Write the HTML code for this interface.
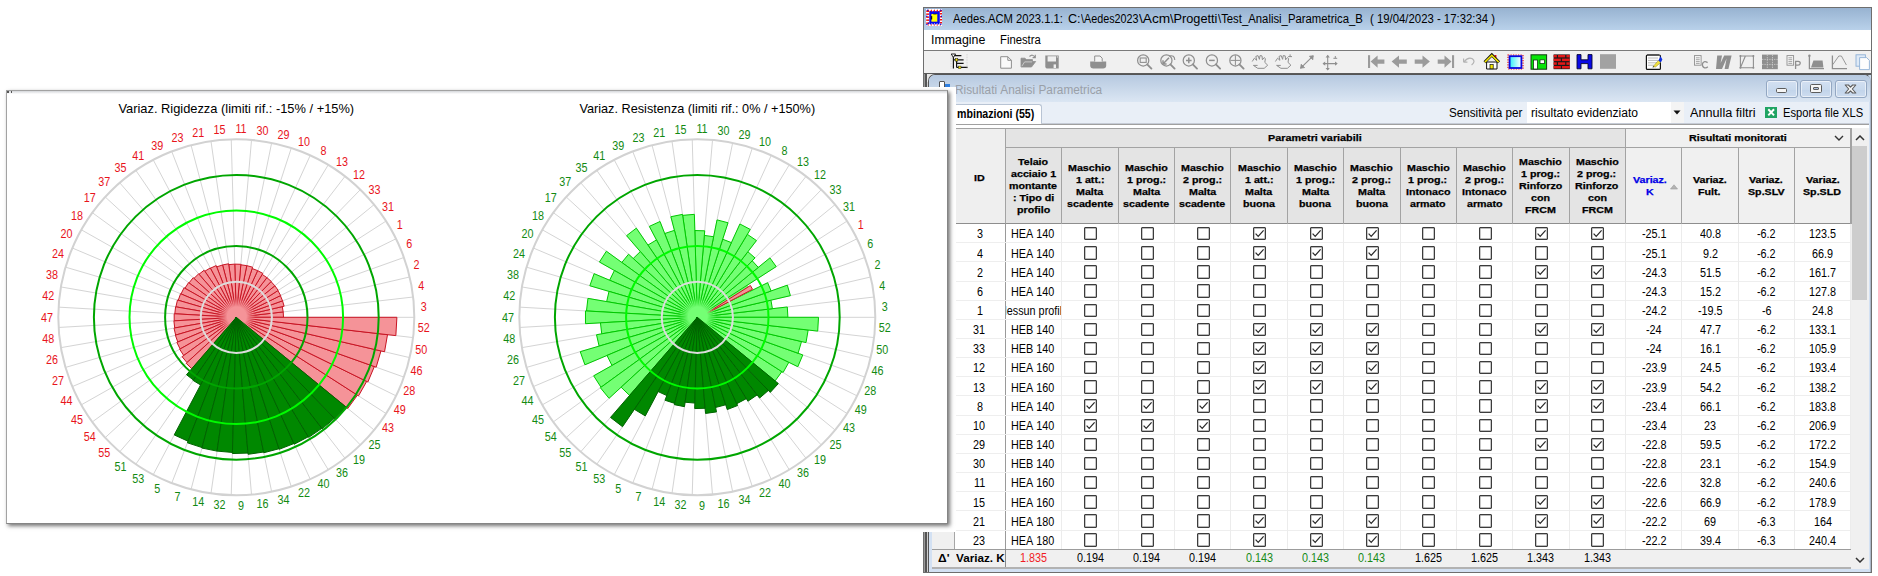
<!DOCTYPE html>
<html><head><meta charset="utf-8"><title>Aedes.ACM</title>
<style>
html,body{margin:0;padding:0;background:#fff;}
body{width:1878px;height:576px;position:relative;overflow:hidden;font-family:"Liberation Sans",sans-serif;}
.b{position:absolute;box-sizing:border-box;}
.t{position:absolute;white-space:nowrap;transform-origin:0 50%;}
svg{position:absolute;left:0;top:0;}
svg text{font-family:"Liberation Sans",sans-serif;font-size:12px;}
</style></head><body>

<div class="b" style="left:923px;top:7px;width:949px;height:566px;background:#fff;border:1px solid #6e6e6e;"></div>
<div class="b" style="left:924px;top:8px;width:947px;height:22px;background:linear-gradient(#98b3d1,#b9d1ea);"></div>
<div class="b" style="left:924px;top:30px;width:947px;height:21px;background:#fff;"></div>
<div class="b" style="left:924px;top:50px;width:947px;height:24px;background:#f0f0f0;border-top:1px solid #7a7a7a;"></div>
<div class="b" style="left:924px;top:73.4px;width:947px;height:1.2px;background:#5a5a5a;"></div>
<div class="b" style="left:924px;top:75px;width:947px;height:497px;background:#c9dbef;"></div>
<svg width="16.7" height="17" viewBox="0 0 16.7 17" style="left:925.7px;top:9.1px"><rect x="0" y="0" width="16.7" height="17" fill="#fff"/><path d="M0.9 2.9 L2.3 0.2 L3.7 2.9 Z" fill="#f01010"/><circle cx="2.3" cy="15.9" r="0.7" fill="#f01010"/><path d="M0.2 1.4 H3.2 V2.9 H0.2 Z" fill="#f01010"/><path d="M13.6 1.0 L16.4 1.0 L15 3.3 Z" fill="#f01010"/><path d="M3.9 2.9 L5.3 0.2 L6.7 2.9 Z" fill="#f01010"/><circle cx="5.3" cy="15.9" r="0.7" fill="#f01010"/><path d="M0.2 4.4 H3.2 V5.9 H0.2 Z" fill="#f01010"/><path d="M13.6 4.0 L16.4 4.0 L15 6.3 Z" fill="#f01010"/><path d="M6.9 2.9 L8.3 0.2 L9.7 2.9 Z" fill="#f01010"/><circle cx="8.3" cy="15.9" r="0.7" fill="#f01010"/><path d="M0.2 7.4 H3.2 V8.9 H0.2 Z" fill="#f01010"/><path d="M13.6 7.0 L16.4 7.0 L15 9.3 Z" fill="#f01010"/><path d="M9.9 2.9 L11.3 0.2 L12.7 2.9 Z" fill="#f01010"/><circle cx="11.3" cy="15.9" r="0.7" fill="#f01010"/><path d="M0.2 10.4 H3.2 V11.9 H0.2 Z" fill="#f01010"/><path d="M13.6 10.0 L16.4 10.0 L15 12.3 Z" fill="#f01010"/><path d="M12.9 2.9 L14.3 0.2 L15.7 2.9 Z" fill="#f01010"/><circle cx="14.3" cy="15.9" r="0.7" fill="#f01010"/><path d="M0.2 13.4 H3.2 V14.9 H0.2 Z" fill="#f01010"/><path d="M13.6 13.0 L16.4 13.0 L15 15.3 Z" fill="#f01010"/><circle cx="1.6" cy="1.2" r="0.8" fill="#1010e0"/><circle cx="14.8" cy="1.2" r="0.8" fill="#1010e0"/><circle cx="0.9" cy="15.6" r="0.8" fill="#1010e0"/><circle cx="14.8" cy="15.3" r="0.8" fill="#1010e0"/><circle cx="0.8" cy="7.2" r="0.8" fill="#1010e0"/><circle cx="15.6" cy="7.4" r="0.8" fill="#1010e0"/><circle cx="2.6" cy="14.2" r="0.8" fill="#1010e0"/><rect x="3.3" y="2.7" width="10.5" height="11.7" fill="#0808f0"/><circle cx="4.6" cy="14.6" r="0.9" fill="#0808f0"/><circle cx="4.6" cy="2.8" r="0.8" fill="#0808f0"/><circle cx="7.2" cy="14.6" r="0.9" fill="#0808f0"/><circle cx="7.2" cy="2.8" r="0.8" fill="#0808f0"/><circle cx="9.8" cy="14.6" r="0.9" fill="#0808f0"/><circle cx="9.8" cy="2.8" r="0.8" fill="#0808f0"/><circle cx="12.4" cy="14.6" r="0.9" fill="#0808f0"/><circle cx="12.4" cy="2.8" r="0.8" fill="#0808f0"/><rect x="5.4" y="5" width="5.9" height="7.7" fill="#ffff00"/><rect x="4.9" y="6.9" width="1.3" height="3.6" rx="0.6" fill="#101010"/><rect x="7.2" y="4.7" width="3.4" height="0.7" fill="#101010"/></svg>
<span class="t" style="left:953.20px;top:12.54px;font-size:12px;line-height:12px;color:#000;transform:scaleX(0.9361);">Aedes.ACM&nbsp;2023.1.1:</span>
<span class="t" style="left:1067.70px;top:12.54px;font-size:12px;line-height:12px;color:#000;transform:scaleX(1.0500);">C:</span>
<span class="t" style="left:1080.90px;top:12.54px;font-size:12px;line-height:12px;color:#000;transform:scaleX(0.8977);">\Aedes2023</span>
<span class="t" style="left:1138.80px;top:12.54px;font-size:12px;line-height:12px;color:#000;transform:scaleX(1.1414);">\Acm</span>
<span class="t" style="left:1170.30px;top:12.54px;font-size:12px;line-height:12px;color:#000;transform:scaleX(1.0607);">\Progetti</span>
<span class="t" style="left:1218.00px;top:12.54px;font-size:12px;line-height:12px;color:#000;transform:scaleX(0.9440);">\Test_Analisi_Parametrica_B</span>
<span class="t" style="left:1369.70px;top:12.54px;font-size:12px;line-height:12px;color:#000;transform:scaleX(0.9464);">(&nbsp;19/04/2023&nbsp;-&nbsp;17:32:34&nbsp;)</span>
<span class="t" style="left:931.30px;top:33.64px;font-size:12px;line-height:12px;color:#000;transform:scaleX(1.0326);">Immagine</span>
<span class="t" style="left:999.80px;top:33.64px;font-size:12px;line-height:12px;color:#000;transform:scaleX(0.9413);">Finestra</span>
<svg width="1878" height="80" viewBox="0 0 1878 80"><g stroke="#111" stroke-width="1.2" fill="none"><path d="M953.4 55.5 V68.6 M953.4 55.6 H961.4 M953.4 59.8 H963.6 M956.6 59.8 V67.4 M956.6 63.4 H963.6 M956.6 67.4 H967.6"/></g><path d="M951.2 54 H955.6 L953.4 57.4 Z" fill="#fff" stroke="#111" stroke-width="0.9"/><path d="M951 55 V69 M967 54 V69" stroke="#bdbdbd" stroke-width="0.6" stroke-dasharray="0.8 0.8"/><rect x="955.2" y="58.5" width="2.6" height="2.6" fill="#f0e000" stroke="#222" stroke-width="0.5"/><rect x="958.4" y="66.1" width="2.6" height="2.6" fill="#f0e000" stroke="#222" stroke-width="0.5"/><path d="M1000.7 56.7 H1007.8 L1011.4 60.3 V68.2 H1000.7 Z" fill="#fafafa" stroke="#8f8f8f" stroke-width="1"/><path d="M1007.8 56.7 V60.3 H1011.4" fill="none" stroke="#8f8f8f" stroke-width="1"/><path d="M1021 67 V58.2 H1025 L1026.3 59.6 H1032.5 V61.5 H1035.7 L1031.5 67 Z" fill="#8f8f8f" stroke="#8f8f8f" stroke-width="0.8" stroke-linejoin="round"/><path d="M1021.8 66.2 L1024.6 61.9 H1032" stroke="#cfcfcf" stroke-width="0.9" fill="none"/><path d="M1029.5 56.5 Q1032.5 53.5 1035 57.2 M1035.3 54.8 V57.6 H1032.6" fill="none" stroke="#8f8f8f" stroke-width="1.1"/><path d="M1045.3 55.5 H1058.7 V68.5 H1046.6 L1045.3 67.2 Z" fill="#8f8f8f"/><rect x="1047.6" y="56.3" width="8.4" height="5.2" fill="#efefef"/><rect x="1053.6" y="64.4" width="2.4" height="3.6" fill="#efefef"/><rect x="1056.8" y="56.4" width="1.1" height="1.1" fill="#efefef"/><path d="M1090.2 61.5 H1106.2 V65.3 Q1106.2 68.5 1103 68.5 H1093.4 Q1090.2 68.5 1090.2 65.3 Z" fill="#8f8f8f"/><path d="M1094.7 61.5 V56 H1100 L1102.2 58.2 V61.5" fill="#f4f4f4" stroke="#8f8f8f" stroke-width="1"/><circle cx="1143.2" cy="60.4" r="5.6" fill="none" stroke="#8f8f8f" stroke-width="1.25"/><path d="M1147.2 64.4 L1151.4 68.6" stroke="#8f8f8f" stroke-width="1.9" stroke-linecap="round"/><rect x="1140.2" y="58" width="6" height="4.4" fill="none" stroke="#8f8f8f" stroke-width="1.1"/><circle cx="1166.4" cy="60.4" r="5.6" fill="none" stroke="#8f8f8f" stroke-width="1.25"/><path d="M1170.4 64.4 L1174.6 68.6" stroke="#8f8f8f" stroke-width="1.9" stroke-linecap="round"/><path d="M1163.2 63.8 L1169 57.8 M1163 63.9 V60.3 M1163 63.9 H1166.6" stroke="#8f8f8f" stroke-width="1.5" fill="none"/><path d="M1169 56 Q1174.5 54.5 1174.8 60" stroke="#8f8f8f" stroke-width="1.1" fill="none"/><circle cx="1188.8" cy="60.4" r="5.6" fill="none" stroke="#8f8f8f" stroke-width="1.25"/><path d="M1192.8 64.4 L1197.0 68.6" stroke="#8f8f8f" stroke-width="1.9" stroke-linecap="round"/><path d="M1186 60.4 H1191.6 M1188.8 57.6 V63.2" stroke="#8f8f8f" stroke-width="1.5"/><circle cx="1211.9" cy="60.4" r="5.6" fill="none" stroke="#8f8f8f" stroke-width="1.25"/><path d="M1215.9 64.4 L1220.1 68.6" stroke="#8f8f8f" stroke-width="1.9" stroke-linecap="round"/><path d="M1209.1 60.4 H1214.7" stroke="#8f8f8f" stroke-width="1.5"/><circle cx="1235.4" cy="60.4" r="5.6" fill="none" stroke="#8f8f8f" stroke-width="1.25"/><path d="M1239.4 64.4 L1243.6 68.6" stroke="#8f8f8f" stroke-width="1.9" stroke-linecap="round"/><path d="M1230.4 60.4 H1240.4 M1235.4 55.4 V65.4" stroke="#8f8f8f" stroke-width="1"/><path d="M1252.2 61.5 L1254.4 58.2 L1256.7 60.3 L1255.8 56.4 L1258.0 55.6 L1259.4 59.3 L1260.0 55.6 L1262.0 55.9 L1262.4 59.8 L1264.2 57.6 L1265.4 58.6 L1264.8 62.4 L1267.7 65.2 L1264.2 68.3 H1257.7 L1253.4 65.4 H1257.6000000000001" fill="none" stroke="#8f8f8f" stroke-width="1" stroke-linejoin="round"/><path d="M1275.4 61.5 L1277.6000000000001 58.2 L1279.9 60.3 L1279.0 56.4 L1281.2 55.6 L1282.6000000000001 59.3 L1283.2 55.6 L1285.2 55.9 L1285.6000000000001 59.8 L1287.4 57.6 L1288.6000000000001 58.6 L1288.0 62.4 L1290.9 65.2 L1287.4 68.3 H1280.9 L1276.6000000000001 65.4 H1280.8000000000002" fill="none" stroke="#8f8f8f" stroke-width="1" stroke-linejoin="round"/><path d="M1288.2 56.6 H1292 M1290.1 54.4 V56.6" stroke="#8f8f8f" stroke-width="1"/><path d="M1300.4 68.4 L1313.4 55.6" stroke="#8f8f8f" stroke-width="1.1"/><path d="M1301.2 64.2 L1300.6 68.2 L1304.6 67.6 Z M1309.4 56.2 L1313.2 55.8 L1312.8 59.8 Z" fill="#8f8f8f" stroke="#8f8f8f" stroke-width="0.8"/><path d="M1327.7 55.5 V70 M1323 63.6 H1337" stroke="#8f8f8f" stroke-width="1.1"/><path d="M1325.6 57.6 L1327.7 54.8 L1329.8 57.6 Z M1325.6 68 L1327.7 70.6 L1329.8 68 Z M1325.2 61.5 L1322.5 63.6 L1325.2 65.7 Z M1335 61.5 L1337.7 63.6 L1335 65.7 Z" fill="#8f8f8f"/><path d="M1333.4 58.3 H1337.2 M1335.3 56 V58.3" stroke="#8f8f8f" stroke-width="1"/><rect x="1368" y="55.2" width="2.1" height="12.8" fill="#9b9b9b"/><path d="M1370.6 61.6 L1377.6 55.4 V59.5 H1384.4 V63.7 H1377.6 V67.8 Z" fill="#9b9b9b"/><path d="M1391.6 61.6 L1399 55.4 V59.5 H1406.8 V63.7 H1399 V67.8 Z" fill="#9b9b9b"/><path d="M1429.9 61.6 L1422.5 55.4 V59.5 H1414.7 V63.7 H1422.5 V67.8 Z" fill="#9b9b9b"/><rect x="1452" y="55.2" width="2.1" height="12.8" fill="#9b9b9b"/><path d="M1451.5 61.6 L1444.5 55.4 V59.5 H1437.7 V63.7 H1444.5 V67.8 Z" fill="#9b9b9b"/><path d="M1463.6 62.2 H1467.4 M1463.6 62.2 V58.6 M1464 62 Q1468 56.6 1472.4 58.8 Q1476 61.6 1471.6 65" fill="none" stroke="#b3b3b3" stroke-width="1.2"/><rect x="1494.4" y="55" width="2" height="4.2" fill="#e01010"/><path d="M1486.6 62 H1497 V69 H1486.6 Z" fill="#fff" stroke="#111" stroke-width="1"/><path d="M1484.6 62.3 L1491.8 55 L1499 62.3" fill="none" stroke="#111" stroke-width="3" stroke-linejoin="miter"/><path d="M1484.9 62.1 L1491.8 55.2 L1498.7 62.1" fill="none" stroke="#f4e800" stroke-width="1.5" stroke-linejoin="miter"/><rect x="1490" y="64.6" width="3.2" height="4.2" fill="#f4e800" stroke="#111" stroke-width="0.7"/><defs><linearGradient id="cy" x1="0" x2="1" y1="0" y2="0"><stop offset="0" stop-color="#30f0f8"/><stop offset="1" stop-color="#fff"/></linearGradient></defs><rect x="1508" y="55" width="15" height="14" fill="none" stroke="#f01010" stroke-width="1.2" stroke-dasharray="1.2 1.3"/><rect x="1509.6" y="56.2" width="11.8" height="11.8" fill="url(#cy)" stroke="#0808e0" stroke-width="1.8"/><rect x="1531" y="54.8" width="15.6" height="14.4" fill="#08e408" stroke="#113a11" stroke-width="1"/><rect x="1533.6" y="60" width="3.8" height="9" fill="#fff" stroke="#113a11" stroke-width="0.8"/><rect x="1540" y="59.8" width="4.6" height="3.8" fill="#fff" stroke="#113a11" stroke-width="0.8"/><rect x="1553.6" y="54.4" width="16.2" height="14.8" fill="#1a1a1a"/><rect x="1553.6" y="54.9" width="3.2" height="2.5" fill="#e41818"/><rect x="1558.0" y="54.9" width="7.2" height="2.5" fill="#e41818"/><rect x="1566.4" y="54.9" width="3.4" height="2.5" fill="#e41818"/><rect x="1553.6" y="58.6" width="7.2" height="2.5" fill="#e41818"/><rect x="1562.0" y="58.6" width="7.8" height="2.5" fill="#e41818"/><rect x="1553.6" y="62.3" width="3.2" height="2.5" fill="#e41818"/><rect x="1558.0" y="62.3" width="7.2" height="2.5" fill="#e41818"/><rect x="1566.4" y="62.3" width="3.4" height="2.5" fill="#e41818"/><rect x="1553.6" y="66.0" width="7.2" height="2.5" fill="#e41818"/><rect x="1562.0" y="66.0" width="7.8" height="2.5" fill="#e41818"/><path d="M1577 54.6 H1581 V59.8 H1588 V54.6 H1592 V68.8 H1588 V63.6 H1581 V68.8 H1577 Z" fill="#0a0ae6" stroke="#080830" stroke-width="0.9"/><rect x="1600" y="54.2" width="16" height="14.6" fill="#a2a2a2"/><rect x="1646.4" y="55" width="14" height="14.4" rx="1" fill="#fff" stroke="#111" stroke-width="1.2"/><path d="M1648 58 H1658 M1648 60.4 H1658 M1648 62.8 H1658 M1648 65.2 H1654" stroke="#a8a8a8" stroke-width="0.8"/><path d="M1647.5 55 H1659.5" stroke="#111" stroke-width="1.6" stroke-dasharray="1 1"/><path d="M1653 66.6 L1658.4 60.4 L1660.8 62.4 L1655.6 67 Z" fill="#f0e040" stroke="#7a6a10" stroke-width="0.4"/><path d="M1658.4 60.4 L1660.6 56.2 L1662.4 59.4 L1660.8 62.4 Z" fill="#1030e0"/><path d="M1652.4 67.4 L1653.4 66.2 L1654.4 67 Z" fill="#111"/><rect x="1694.5" y="55.6" width="6.6" height="9.6" fill="#f6f6f6" stroke="#8f8f8f" stroke-width="0.9"/><path d="M1695.9 57.8 H1699.7 M1695.9 59.7 H1699.7 M1695.9 61.6 H1699.7 M1695.9 63.4 H1699.7" stroke="#8f8f8f" stroke-width="0.8"/><path d="M1707.6 62.6 Q1704.2 60.2 1702.6 63.4 Q1701.8 66.8 1704.6 67.8 Q1706.4 68.2 1707.8 66.8" fill="none" stroke="#8f8f8f" stroke-width="1.3"/><path d="M1716 69 L1717.2 55.4 H1722 L1720.6 63 L1724.2 55.4 H1731.6 L1728.4 69 H1724.6 L1726.6 58.4 L1722 69 Z" fill="#8f8f8f"/><path d="M1740.4 56 H1753.4 V67.8 H1740.4 Z M1740.4 67.8 L1745.4 56" fill="none" stroke="#8f8f8f" stroke-width="1.1"/><circle cx="1740.4" cy="56" r="1" fill="#8f8f8f"/><circle cx="1753.4" cy="56" r="1" fill="#8f8f8f"/><circle cx="1740.4" cy="67.8" r="1" fill="#8f8f8f"/><circle cx="1753.4" cy="67.8" r="1" fill="#8f8f8f"/><rect x="1762" y="54.6" width="15.8" height="14.6" fill="#8f8f8f"/><path d="M1767.3 54.6 V69.2 M1772.5 54.6 V69.2 M1762 59.4 H1777.8 M1762 64.4 H1777.8" stroke="#d8d8d8" stroke-width="0.7" stroke-dasharray="1.4 1"/><rect x="1787" y="55.6" width="6.6" height="9.6" fill="#f6f6f6" stroke="#8f8f8f" stroke-width="0.9"/><path d="M1788.4 57.8 H1792.2 M1788.4 59.7 H1792.2 M1788.4 61.6 H1792.2 M1788.4 63.4 H1792.2" stroke="#8f8f8f" stroke-width="0.8"/><path d="M1795.6 69 V61.4 H1798.2 Q1800.4 61.6 1800.2 63.4 Q1800 65.2 1798 65.2 H1795.6" fill="none" stroke="#8f8f8f" stroke-width="1.3"/><path d="M1809.4 55.6 V68.6 H1824" fill="none" stroke="#8f8f8f" stroke-width="1.3"/><circle cx="1809.4" cy="55.8" r="1.2" fill="#8f8f8f"/><path d="M1811 67.6 L1813.4 60.4 H1822.6 L1823.4 67.6 Z" fill="#8f8f8f"/><path d="M1832.4 55.6 V68.6 H1847" fill="none" stroke="#8f8f8f" stroke-width="1.3"/><path d="M1832.8 64.6 L1838.8 56 H1841.4 L1846.4 65" fill="none" stroke="#8f8f8f" stroke-width="0.9"/><rect x="1856" y="54.8" width="9.4" height="11.4" fill="#dfeaf6" stroke="#8fb0d6" stroke-width="0.9"/><path d="M1859.6 57.6 H1866.6 L1869.4 60.4 V69.6 H1859.6 Z" fill="#fdfdfd" stroke="#8fb0d6" stroke-width="0.9"/></svg>
<div class="b" style="left:924px;top:74.4px;width:1px;height:498px;background:#9a9a9a;"></div>
<div class="b" style="left:924.9px;top:74.4px;width:1.8px;height:498px;background:#555;"></div>
<div class="b" style="left:926.7px;top:74.4px;width:1.1px;height:498px;background:#cfcfcf;"></div>
<div class="b" style="left:926.7px;top:74.4px;width:8px;height:8px;background:#e8e8e8;"></div>
<div class="b" style="left:927.7px;top:74.3px;width:943.6px;height:498.2px;background:#d3e1f3;border:1.1px solid #555;border-right-color:#aab7c8;border-bottom:none;border-radius:7px 7px 0 0;"></div>
<div class="b" style="left:928.8px;top:75.4px;width:941.4px;height:26.6px;background:linear-gradient(#b6c9e0,#dbe6f3);border-radius:6px 6px 0 0;"></div>
<div class="b" style="left:932px;top:102px;width:937px;height:467px;background:#f0f0f0;"></div>
<div class="b" style="left:939.2px;top:81.3px;width:6px;height:12px;background:#fff;border:1px solid #555;border-radius:1px;"></div>
<div class="b" style="left:945.2px;top:84.2px;width:5px;height:8px;background:#2f7fe0;"></div>
<span class="t" style="left:954.50px;top:83.84px;font-size:12px;line-height:12px;color:#9aa0a8;transform:scaleX(0.9851);">Risultati&nbsp;Analisi&nbsp;Parametrica</span>
<div class="b" style="left:1766.3px;top:80.2px;width:31.9px;height:17.9px;border:1px solid #93a7c2;border-radius:3px;background:linear-gradient(#d3e0f1,#c8d9ed 55%,#c2d4ea 56%,#cddcef);box-shadow:inset 0 0 0 1px rgba(255,255,255,0.55);"></div>
<div class="b" style="left:1800.0px;top:80.2px;width:31.9px;height:17.9px;border:1px solid #93a7c2;border-radius:3px;background:linear-gradient(#d3e0f1,#c8d9ed 55%,#c2d4ea 56%,#cddcef);box-shadow:inset 0 0 0 1px rgba(255,255,255,0.55);"></div>
<div class="b" style="left:1834.7px;top:80.2px;width:31.9px;height:17.9px;border:1px solid #93a7c2;border-radius:3px;background:linear-gradient(#d3e0f1,#c8d9ed 55%,#c2d4ea 56%,#cddcef);box-shadow:inset 0 0 0 1px rgba(255,255,255,0.55);"></div>
<div class="b" style="left:1776px;top:88.1px;width:11.4px;height:5.1px;background:#f6f6f6;border:1.1px solid #5c5c5c;border-radius:1.6px;"></div>
<div class="b" style="left:1810.3px;top:84px;width:11.7px;height:8.9px;background:#f6f6f6;border:1.1px solid #5c5c5c;border-radius:1.6px;"></div>
<div class="b" style="left:1813.4px;top:87px;width:5.5px;height:3px;background:#aebfdc;border:1px solid #5c5c5c;border-radius:1px;"></div>
<svg width="13" height="10" viewBox="0 0 13 10" style="left:1844px;top:83.8px"><path d="M1.2 1 L4.4 1 L6.5 3.2 L8.6 1 L11.8 1 L8.3 5 L11.8 9 L8.6 9 L6.5 6.8 L4.4 9 L1.2 9 L4.7 5 Z" fill="#f6f6f6" stroke="#5c5c5c" stroke-width="1.1" stroke-linejoin="round"/></svg>
<div class="b" style="left:932px;top:102px;width:937px;height:22px;background:#e9eff7;"></div>
<div class="b" style="left:940px;top:104px;width:102px;height:20px;background:#fff;border:1px solid #b8c4d4;border-bottom:none;border-radius:3px 3px 0 0;"></div>
<div class="b" style="left:932px;top:123px;width:937px;height:1px;background:#c6ccd6;"></div>
<div class="b" style="left:941px;top:123px;width:100px;height:1px;background:#fff;"></div>
<span class="t" style="left:957.00px;top:107.84px;font-size:12px;line-height:12px;color:#000;font-weight:bold;transform:scaleX(0.8851);">mbinazioni&nbsp;(55)</span>
<span class="t" style="left:1449.00px;top:107.14px;font-size:12px;line-height:12px;color:#000;transform:scaleX(0.9726);">Sensitività&nbsp;per</span>
<div class="b" style="left:1527px;top:102.4px;width:156.5px;height:20.2px;background:#fff;"></div>
<div class="b" style="left:1671px;top:102.4px;width:12.5px;height:20.2px;background:#f4f4f4;"></div>
<span class="t" style="left:1531.30px;top:107.14px;font-size:12px;line-height:12px;color:#000;transform:scaleX(1.0089);">risultato&nbsp;evidenziato</span>
<svg width="8" height="5" viewBox="0 0 8 5" style="left:1673.3px;top:110.4px"><path d="M0.5 0.5 L7.5 0.5 L4 4.5 Z" fill="#111"/></svg>
<span class="t" style="left:1689.50px;top:107.14px;font-size:12px;line-height:12px;color:#000;transform:scaleX(1.0560);">Annulla&nbsp;filtri</span>
<div class="b" style="left:1765.2px;top:107.2px;width:12.3px;height:10.6px;background:#1fa463;"></div>
<svg width="12.3" height="10.6" viewBox="0 0 12 10" style="left:1765.2px;top:107.2px"><path d="M3.2 2 L8.8 8 M8.8 2 L3.2 8" stroke="#fff" stroke-width="1.9" fill="none"/></svg>
<span class="t" style="left:1782.60px;top:107.14px;font-size:12px;line-height:12px;color:#000;transform:scaleX(0.9321);">Esporta&nbsp;file&nbsp;XLS</span>
<div class="b" style="left:932px;top:124px;width:936.5px;height:444.5px;background:#fff;"></div>
<div class="b" style="left:932px;top:124px;width:936.5px;height:1px;background:#a0a0a0;"></div>
<div class="b" style="left:932px;top:125px;width:936.5px;height:3px;background:#fff;"></div>
<div class="b" style="left:932px;top:128px;width:73.29999999999995px;height:95.6px;background:#efefef;"></div>
<div class="b" style="left:1005.3px;top:128px;width:619.883px;height:95.6px;background:#e4e4e4;"></div>
<div class="b" style="left:1625.183px;top:128px;width:225.41200000000003px;height:95.6px;background:#f0f0f0;"></div>
<div class="b" style="left:932px;top:127.5px;width:918.595px;height:1px;background:#a3a3a3;"></div>
<div class="b" style="left:1005.3px;top:146.8px;width:845.2950000000001px;height:1px;background:#a3a3a3;"></div>
<div class="b" style="left:932px;top:223.1px;width:918.595px;height:1px;background:#8e8e8e;"></div>
<div class="b" style="left:1005.0px;top:128px;width:1px;height:95.6px;background:#a3a3a3;"></div>
<div class="b" style="left:1061.0px;top:147px;width:1px;height:76.6px;background:#a3a3a3;"></div>
<div class="b" style="left:1117.5px;top:147px;width:1px;height:76.6px;background:#a3a3a3;"></div>
<div class="b" style="left:1174.0px;top:147px;width:1px;height:76.6px;background:#a3a3a3;"></div>
<div class="b" style="left:1230.0px;top:147px;width:1px;height:76.6px;background:#a3a3a3;"></div>
<div class="b" style="left:1286.5px;top:147px;width:1px;height:76.6px;background:#a3a3a3;"></div>
<div class="b" style="left:1343.0px;top:147px;width:1px;height:76.6px;background:#a3a3a3;"></div>
<div class="b" style="left:1399.5px;top:147px;width:1px;height:76.6px;background:#a3a3a3;"></div>
<div class="b" style="left:1455.5px;top:147px;width:1px;height:76.6px;background:#a3a3a3;"></div>
<div class="b" style="left:1512.0px;top:147px;width:1px;height:76.6px;background:#a3a3a3;"></div>
<div class="b" style="left:1568.5px;top:147px;width:1px;height:76.6px;background:#a3a3a3;"></div>
<div class="b" style="left:1624.5px;top:128px;width:1px;height:95.6px;background:#a3a3a3;"></div>
<div class="b" style="left:1681.0px;top:147px;width:1px;height:76.6px;background:#a3a3a3;"></div>
<div class="b" style="left:1737.5px;top:147px;width:1px;height:76.6px;background:#a3a3a3;"></div>
<div class="b" style="left:1793.5px;top:147px;width:1px;height:76.6px;background:#a3a3a3;"></div>
<div class="b" style="left:1850.0px;top:128px;width:1px;height:95.6px;background:#a3a3a3;"></div>
<div class="b" style="left:1004.8px;top:223px;width:1px;height:345.5px;background:#9a9a9a;"></div>
<span class="t" style="left:1268.39px;top:133.46px;font-size:9.5px;line-height:9.5px;color:#000;font-weight:bold;transform:scaleX(1.1375);-webkit-text-stroke:0.25px #000;">Parametri&nbsp;variabili</span>
<span class="t" style="left:1688.99px;top:133.46px;font-size:9.5px;line-height:9.5px;color:#000;font-weight:bold;transform:scaleX(1.1300);-webkit-text-stroke:0.25px #000;">Risultati&nbsp;monitorati</span>
<svg width="10" height="6" viewBox="0 0 10 6" style="left:1834px;top:134.5px"><path d="M1 1 L5 5 L9 1" stroke="#333" stroke-width="1.4" fill="none"/></svg>
<span class="t" style="left:974.46px;top:172.56px;font-size:9.5px;line-height:9.5px;color:#000;font-weight:bold;transform:scaleX(1.1240);-webkit-text-stroke:0.25px #000;">ID</span>
<span class="t" style="left:1018.45px;top:156.96px;font-size:9.5px;line-height:9.5px;color:#000;font-weight:bold;transform:scaleX(1.1240);-webkit-text-stroke:0.25px #000;">Telaio</span>
<span class="t" style="left:1010.92px;top:168.96px;font-size:9.5px;line-height:9.5px;color:#000;font-weight:bold;transform:scaleX(1.1240);-webkit-text-stroke:0.25px #000;">acciaio&nbsp;1</span>
<span class="t" style="left:1009.45px;top:180.96px;font-size:9.5px;line-height:9.5px;color:#000;font-weight:bold;transform:scaleX(1.1240);-webkit-text-stroke:0.25px #000;">montante</span>
<span class="t" style="left:1012.82px;top:192.96px;font-size:9.5px;line-height:9.5px;color:#000;font-weight:bold;transform:scaleX(1.1240);-webkit-text-stroke:0.25px #000;">:&nbsp;Tipo&nbsp;di</span>
<span class="t" style="left:1016.87px;top:204.96px;font-size:9.5px;line-height:9.5px;color:#000;font-weight:bold;transform:scaleX(1.1240);-webkit-text-stroke:0.25px #000;">profilo</span>
<span class="t" style="left:1068.47px;top:162.96px;font-size:9.5px;line-height:9.5px;color:#000;font-weight:bold;transform:scaleX(1.1240);-webkit-text-stroke:0.25px #000;">Maschio</span>
<span class="t" style="left:1075.59px;top:174.96px;font-size:9.5px;line-height:9.5px;color:#000;font-weight:bold;transform:scaleX(1.1240);-webkit-text-stroke:0.25px #000;">1&nbsp;att.:</span>
<span class="t" style="left:1076.18px;top:186.96px;font-size:9.5px;line-height:9.5px;color:#000;font-weight:bold;transform:scaleX(1.1240);-webkit-text-stroke:0.25px #000;">Malta</span>
<span class="t" style="left:1066.68px;top:198.96px;font-size:9.5px;line-height:9.5px;color:#000;font-weight:bold;transform:scaleX(1.1240);-webkit-text-stroke:0.25px #000;">scadente</span>
<span class="t" style="left:1124.82px;top:162.96px;font-size:9.5px;line-height:9.5px;color:#000;font-weight:bold;transform:scaleX(1.1240);-webkit-text-stroke:0.25px #000;">Maschio</span>
<span class="t" style="left:1126.61px;top:174.96px;font-size:9.5px;line-height:9.5px;color:#000;font-weight:bold;transform:scaleX(1.1240);-webkit-text-stroke:0.25px #000;">1&nbsp;prog.:</span>
<span class="t" style="left:1132.54px;top:186.96px;font-size:9.5px;line-height:9.5px;color:#000;font-weight:bold;transform:scaleX(1.1240);-webkit-text-stroke:0.25px #000;">Malta</span>
<span class="t" style="left:1123.04px;top:198.96px;font-size:9.5px;line-height:9.5px;color:#000;font-weight:bold;transform:scaleX(1.1240);-webkit-text-stroke:0.25px #000;">scadente</span>
<span class="t" style="left:1181.18px;top:162.96px;font-size:9.5px;line-height:9.5px;color:#000;font-weight:bold;transform:scaleX(1.1240);-webkit-text-stroke:0.25px #000;">Maschio</span>
<span class="t" style="left:1182.96px;top:174.96px;font-size:9.5px;line-height:9.5px;color:#000;font-weight:bold;transform:scaleX(1.1240);-webkit-text-stroke:0.25px #000;">2&nbsp;prog.:</span>
<span class="t" style="left:1188.89px;top:186.96px;font-size:9.5px;line-height:9.5px;color:#000;font-weight:bold;transform:scaleX(1.1240);-webkit-text-stroke:0.25px #000;">Malta</span>
<span class="t" style="left:1179.39px;top:198.96px;font-size:9.5px;line-height:9.5px;color:#000;font-weight:bold;transform:scaleX(1.1240);-webkit-text-stroke:0.25px #000;">scadente</span>
<span class="t" style="left:1237.53px;top:162.96px;font-size:9.5px;line-height:9.5px;color:#000;font-weight:bold;transform:scaleX(1.1240);-webkit-text-stroke:0.25px #000;">Maschio</span>
<span class="t" style="left:1244.65px;top:174.96px;font-size:9.5px;line-height:9.5px;color:#000;font-weight:bold;transform:scaleX(1.1240);-webkit-text-stroke:0.25px #000;">1&nbsp;att.:</span>
<span class="t" style="left:1245.24px;top:186.96px;font-size:9.5px;line-height:9.5px;color:#000;font-weight:bold;transform:scaleX(1.1240);-webkit-text-stroke:0.25px #000;">Malta</span>
<span class="t" style="left:1242.88px;top:198.96px;font-size:9.5px;line-height:9.5px;color:#000;font-weight:bold;transform:scaleX(1.1240);-webkit-text-stroke:0.25px #000;">buona</span>
<span class="t" style="left:1293.88px;top:162.96px;font-size:9.5px;line-height:9.5px;color:#000;font-weight:bold;transform:scaleX(1.1240);-webkit-text-stroke:0.25px #000;">Maschio</span>
<span class="t" style="left:1295.67px;top:174.96px;font-size:9.5px;line-height:9.5px;color:#000;font-weight:bold;transform:scaleX(1.1240);-webkit-text-stroke:0.25px #000;">1&nbsp;prog.:</span>
<span class="t" style="left:1301.60px;top:186.96px;font-size:9.5px;line-height:9.5px;color:#000;font-weight:bold;transform:scaleX(1.1240);-webkit-text-stroke:0.25px #000;">Malta</span>
<span class="t" style="left:1299.23px;top:198.96px;font-size:9.5px;line-height:9.5px;color:#000;font-weight:bold;transform:scaleX(1.1240);-webkit-text-stroke:0.25px #000;">buona</span>
<span class="t" style="left:1350.24px;top:162.96px;font-size:9.5px;line-height:9.5px;color:#000;font-weight:bold;transform:scaleX(1.1240);-webkit-text-stroke:0.25px #000;">Maschio</span>
<span class="t" style="left:1352.02px;top:174.96px;font-size:9.5px;line-height:9.5px;color:#000;font-weight:bold;transform:scaleX(1.1240);-webkit-text-stroke:0.25px #000;">2&nbsp;prog.:</span>
<span class="t" style="left:1357.95px;top:186.96px;font-size:9.5px;line-height:9.5px;color:#000;font-weight:bold;transform:scaleX(1.1240);-webkit-text-stroke:0.25px #000;">Malta</span>
<span class="t" style="left:1355.58px;top:198.96px;font-size:9.5px;line-height:9.5px;color:#000;font-weight:bold;transform:scaleX(1.1240);-webkit-text-stroke:0.25px #000;">buona</span>
<span class="t" style="left:1406.59px;top:162.96px;font-size:9.5px;line-height:9.5px;color:#000;font-weight:bold;transform:scaleX(1.1240);-webkit-text-stroke:0.25px #000;">Maschio</span>
<span class="t" style="left:1408.37px;top:174.96px;font-size:9.5px;line-height:9.5px;color:#000;font-weight:bold;transform:scaleX(1.1240);-webkit-text-stroke:0.25px #000;">1&nbsp;prog.:</span>
<span class="t" style="left:1405.70px;top:186.96px;font-size:9.5px;line-height:9.5px;color:#000;font-weight:bold;transform:scaleX(1.1240);-webkit-text-stroke:0.25px #000;">Intonaco</span>
<span class="t" style="left:1410.15px;top:198.96px;font-size:9.5px;line-height:9.5px;color:#000;font-weight:bold;transform:scaleX(1.1240);-webkit-text-stroke:0.25px #000;">armato</span>
<span class="t" style="left:1462.94px;top:162.96px;font-size:9.5px;line-height:9.5px;color:#000;font-weight:bold;transform:scaleX(1.1240);-webkit-text-stroke:0.25px #000;">Maschio</span>
<span class="t" style="left:1464.73px;top:174.96px;font-size:9.5px;line-height:9.5px;color:#000;font-weight:bold;transform:scaleX(1.1240);-webkit-text-stroke:0.25px #000;">2&nbsp;prog.:</span>
<span class="t" style="left:1462.06px;top:186.96px;font-size:9.5px;line-height:9.5px;color:#000;font-weight:bold;transform:scaleX(1.1240);-webkit-text-stroke:0.25px #000;">Intonaco</span>
<span class="t" style="left:1466.50px;top:198.96px;font-size:9.5px;line-height:9.5px;color:#000;font-weight:bold;transform:scaleX(1.1240);-webkit-text-stroke:0.25px #000;">armato</span>
<span class="t" style="left:1519.29px;top:156.96px;font-size:9.5px;line-height:9.5px;color:#000;font-weight:bold;transform:scaleX(1.1240);-webkit-text-stroke:0.25px #000;">Maschio</span>
<span class="t" style="left:1521.08px;top:168.96px;font-size:9.5px;line-height:9.5px;color:#000;font-weight:bold;transform:scaleX(1.1240);-webkit-text-stroke:0.25px #000;">1&nbsp;prog.:</span>
<span class="t" style="left:1519.01px;top:180.96px;font-size:9.5px;line-height:9.5px;color:#000;font-weight:bold;transform:scaleX(1.1240);-webkit-text-stroke:0.25px #000;">Rinforzo</span>
<span class="t" style="left:1531.16px;top:192.96px;font-size:9.5px;line-height:9.5px;color:#000;font-weight:bold;transform:scaleX(1.1240);-webkit-text-stroke:0.25px #000;">con</span>
<span class="t" style="left:1525.23px;top:204.96px;font-size:9.5px;line-height:9.5px;color:#000;font-weight:bold;transform:scaleX(1.1240);-webkit-text-stroke:0.25px #000;">FRCM</span>
<span class="t" style="left:1575.65px;top:156.96px;font-size:9.5px;line-height:9.5px;color:#000;font-weight:bold;transform:scaleX(1.1240);-webkit-text-stroke:0.25px #000;">Maschio</span>
<span class="t" style="left:1577.43px;top:168.96px;font-size:9.5px;line-height:9.5px;color:#000;font-weight:bold;transform:scaleX(1.1240);-webkit-text-stroke:0.25px #000;">2&nbsp;prog.:</span>
<span class="t" style="left:1575.36px;top:180.96px;font-size:9.5px;line-height:9.5px;color:#000;font-weight:bold;transform:scaleX(1.1240);-webkit-text-stroke:0.25px #000;">Rinforzo</span>
<span class="t" style="left:1587.52px;top:192.96px;font-size:9.5px;line-height:9.5px;color:#000;font-weight:bold;transform:scaleX(1.1240);-webkit-text-stroke:0.25px #000;">con</span>
<span class="t" style="left:1581.59px;top:204.96px;font-size:9.5px;line-height:9.5px;color:#000;font-weight:bold;transform:scaleX(1.1240);-webkit-text-stroke:0.25px #000;">FRCM</span>
<span class="t" style="left:1632.84px;top:174.96px;font-size:9.5px;line-height:9.5px;color:#0000e6;font-weight:bold;transform:scaleX(1.1240);-webkit-text-stroke:0.25px #0000e6;">Variaz.</span>
<span class="t" style="left:1645.90px;top:186.96px;font-size:9.5px;line-height:9.5px;color:#0000e6;font-weight:bold;transform:scaleX(1.1240);-webkit-text-stroke:0.25px #0000e6;">K</span>
<span class="t" style="left:1692.79px;top:174.96px;font-size:9.5px;line-height:9.5px;color:#000;font-weight:bold;transform:scaleX(1.1240);-webkit-text-stroke:0.25px #000;">Variaz.</span>
<span class="t" style="left:1698.45px;top:186.96px;font-size:9.5px;line-height:9.5px;color:#000;font-weight:bold;transform:scaleX(1.1240);-webkit-text-stroke:0.25px #000;">Fult.</span>
<span class="t" style="left:1749.15px;top:174.96px;font-size:9.5px;line-height:9.5px;color:#000;font-weight:bold;transform:scaleX(1.1240);-webkit-text-stroke:0.25px #000;">Variaz.</span>
<span class="t" style="left:1747.77px;top:186.96px;font-size:9.5px;line-height:9.5px;color:#000;font-weight:bold;transform:scaleX(1.1240);-webkit-text-stroke:0.25px #000;">Sp.SLV</span>
<span class="t" style="left:1805.50px;top:174.96px;font-size:9.5px;line-height:9.5px;color:#000;font-weight:bold;transform:scaleX(1.1240);-webkit-text-stroke:0.25px #000;">Variaz.</span>
<span class="t" style="left:1803.44px;top:186.96px;font-size:9.5px;line-height:9.5px;color:#000;font-weight:bold;transform:scaleX(1.1240);-webkit-text-stroke:0.25px #000;">Sp.SLD</span>
<svg width="8" height="6" viewBox="0 0 8 6" style="left:1669.5px;top:183.5px"><path d="M0.5 5 L4 0.8 L7.5 5 Z" fill="#b4b4b4" stroke="#9a9a9a" stroke-width="0.6"/></svg>
<div class="b" style="left:954.3px;top:242.255px;width:896.2950000000001px;height:1px;background:#eeeeee;"></div>
<span class="t" style="left:976.50px;top:228.34px;font-size:12px;line-height:12px;color:#000;transform:scaleX(0.9000);">3</span>
<span class="t" style="left:1011.16px;top:228.34px;font-size:12px;line-height:12px;color:#000;transform:scaleX(0.9000);">HEA&nbsp;140</span>
<div class="b" style="left:1083.5px;top:226.97750000000002px;width:13.2px;height:13.4px;background:#fff;border:1px solid #3c3c3c;border-radius:1px;box-shadow:inset 0 0 0 0.4px #777;"></div>
<div class="b" style="left:1140.5px;top:226.97750000000002px;width:13.2px;height:13.4px;background:#fff;border:1px solid #3c3c3c;border-radius:1px;box-shadow:inset 0 0 0 0.4px #777;"></div>
<div class="b" style="left:1196.5px;top:226.97750000000002px;width:13.2px;height:13.4px;background:#fff;border:1px solid #3c3c3c;border-radius:1px;box-shadow:inset 0 0 0 0.4px #777;"></div>
<div class="b" style="left:1252.5px;top:226.97750000000002px;width:13.2px;height:13.4px;background:#fff;border:1px solid #3c3c3c;border-radius:1px;box-shadow:inset 0 0 0 0.4px #777;"></div>
<svg width="13" height="13" viewBox="0 0 13 13" style="left:1252.5px;top:226.97750000000002px"><path d="M2.6 6.6 L5.2 9.4 L10.6 3.4" stroke="#2a2a2a" stroke-width="1.25" fill="none"/></svg>
<div class="b" style="left:1309.5px;top:226.97750000000002px;width:13.2px;height:13.4px;background:#fff;border:1px solid #3c3c3c;border-radius:1px;box-shadow:inset 0 0 0 0.4px #777;"></div>
<svg width="13" height="13" viewBox="0 0 13 13" style="left:1309.5px;top:226.97750000000002px"><path d="M2.6 6.6 L5.2 9.4 L10.6 3.4" stroke="#2a2a2a" stroke-width="1.25" fill="none"/></svg>
<div class="b" style="left:1365.5px;top:226.97750000000002px;width:13.2px;height:13.4px;background:#fff;border:1px solid #3c3c3c;border-radius:1px;box-shadow:inset 0 0 0 0.4px #777;"></div>
<svg width="13" height="13" viewBox="0 0 13 13" style="left:1365.5px;top:226.97750000000002px"><path d="M2.6 6.6 L5.2 9.4 L10.6 3.4" stroke="#2a2a2a" stroke-width="1.25" fill="none"/></svg>
<div class="b" style="left:1421.5px;top:226.97750000000002px;width:13.2px;height:13.4px;background:#fff;border:1px solid #3c3c3c;border-radius:1px;box-shadow:inset 0 0 0 0.4px #777;"></div>
<div class="b" style="left:1478.5px;top:226.97750000000002px;width:13.2px;height:13.4px;background:#fff;border:1px solid #3c3c3c;border-radius:1px;box-shadow:inset 0 0 0 0.4px #777;"></div>
<div class="b" style="left:1534.5px;top:226.97750000000002px;width:13.2px;height:13.4px;background:#fff;border:1px solid #3c3c3c;border-radius:1px;box-shadow:inset 0 0 0 0.4px #777;"></div>
<svg width="13" height="13" viewBox="0 0 13 13" style="left:1534.5px;top:226.97750000000002px"><path d="M2.6 6.6 L5.2 9.4 L10.6 3.4" stroke="#2a2a2a" stroke-width="1.25" fill="none"/></svg>
<div class="b" style="left:1590.5px;top:226.97750000000002px;width:13.2px;height:13.4px;background:#fff;border:1px solid #3c3c3c;border-radius:1px;box-shadow:inset 0 0 0 0.4px #777;"></div>
<svg width="13" height="13" viewBox="0 0 13 13" style="left:1590.5px;top:226.97750000000002px"><path d="M2.6 6.6 L5.2 9.4 L10.6 3.4" stroke="#2a2a2a" stroke-width="1.25" fill="none"/></svg>
<span class="t" style="left:1641.55px;top:228.34px;font-size:12px;line-height:12px;color:#000;transform:scaleX(0.9000);">-25.1</span>
<span class="t" style="left:1699.70px;top:228.34px;font-size:12px;line-height:12px;color:#000;transform:scaleX(0.9000);">40.8</span>
<span class="t" style="left:1757.26px;top:228.34px;font-size:12px;line-height:12px;color:#000;transform:scaleX(0.9000);">-6.2</span>
<span class="t" style="left:1809.41px;top:228.34px;font-size:12px;line-height:12px;color:#000;transform:scaleX(0.9000);">123.5</span>
<div class="b" style="left:954.3px;top:261.40999999999997px;width:896.2950000000001px;height:1px;background:#eeeeee;"></div>
<span class="t" style="left:976.50px;top:247.50px;font-size:12px;line-height:12px;color:#000;transform:scaleX(0.9000);">4</span>
<span class="t" style="left:1011.16px;top:247.50px;font-size:12px;line-height:12px;color:#000;transform:scaleX(0.9000);">HEA&nbsp;140</span>
<div class="b" style="left:1083.5px;top:246.1325px;width:13.2px;height:13.4px;background:#fff;border:1px solid #3c3c3c;border-radius:1px;box-shadow:inset 0 0 0 0.4px #777;"></div>
<div class="b" style="left:1140.5px;top:246.1325px;width:13.2px;height:13.4px;background:#fff;border:1px solid #3c3c3c;border-radius:1px;box-shadow:inset 0 0 0 0.4px #777;"></div>
<div class="b" style="left:1196.5px;top:246.1325px;width:13.2px;height:13.4px;background:#fff;border:1px solid #3c3c3c;border-radius:1px;box-shadow:inset 0 0 0 0.4px #777;"></div>
<div class="b" style="left:1252.5px;top:246.1325px;width:13.2px;height:13.4px;background:#fff;border:1px solid #3c3c3c;border-radius:1px;box-shadow:inset 0 0 0 0.4px #777;"></div>
<svg width="13" height="13" viewBox="0 0 13 13" style="left:1252.5px;top:246.1325px"><path d="M2.6 6.6 L5.2 9.4 L10.6 3.4" stroke="#2a2a2a" stroke-width="1.25" fill="none"/></svg>
<div class="b" style="left:1309.5px;top:246.1325px;width:13.2px;height:13.4px;background:#fff;border:1px solid #3c3c3c;border-radius:1px;box-shadow:inset 0 0 0 0.4px #777;"></div>
<svg width="13" height="13" viewBox="0 0 13 13" style="left:1309.5px;top:246.1325px"><path d="M2.6 6.6 L5.2 9.4 L10.6 3.4" stroke="#2a2a2a" stroke-width="1.25" fill="none"/></svg>
<div class="b" style="left:1365.5px;top:246.1325px;width:13.2px;height:13.4px;background:#fff;border:1px solid #3c3c3c;border-radius:1px;box-shadow:inset 0 0 0 0.4px #777;"></div>
<svg width="13" height="13" viewBox="0 0 13 13" style="left:1365.5px;top:246.1325px"><path d="M2.6 6.6 L5.2 9.4 L10.6 3.4" stroke="#2a2a2a" stroke-width="1.25" fill="none"/></svg>
<div class="b" style="left:1421.5px;top:246.1325px;width:13.2px;height:13.4px;background:#fff;border:1px solid #3c3c3c;border-radius:1px;box-shadow:inset 0 0 0 0.4px #777;"></div>
<div class="b" style="left:1478.5px;top:246.1325px;width:13.2px;height:13.4px;background:#fff;border:1px solid #3c3c3c;border-radius:1px;box-shadow:inset 0 0 0 0.4px #777;"></div>
<div class="b" style="left:1534.5px;top:246.1325px;width:13.2px;height:13.4px;background:#fff;border:1px solid #3c3c3c;border-radius:1px;box-shadow:inset 0 0 0 0.4px #777;"></div>
<div class="b" style="left:1590.5px;top:246.1325px;width:13.2px;height:13.4px;background:#fff;border:1px solid #3c3c3c;border-radius:1px;box-shadow:inset 0 0 0 0.4px #777;"></div>
<span class="t" style="left:1641.55px;top:247.50px;font-size:12px;line-height:12px;color:#000;transform:scaleX(0.9000);">-25.1</span>
<span class="t" style="left:1702.71px;top:247.50px;font-size:12px;line-height:12px;color:#000;transform:scaleX(0.9000);">9.2</span>
<span class="t" style="left:1757.26px;top:247.50px;font-size:12px;line-height:12px;color:#000;transform:scaleX(0.9000);">-6.2</span>
<span class="t" style="left:1812.41px;top:247.50px;font-size:12px;line-height:12px;color:#000;transform:scaleX(0.9000);">66.9</span>
<div class="b" style="left:954.3px;top:280.56499999999994px;width:896.2950000000001px;height:1px;background:#eeeeee;"></div>
<span class="t" style="left:976.50px;top:266.65px;font-size:12px;line-height:12px;color:#000;transform:scaleX(0.9000);">2</span>
<span class="t" style="left:1011.16px;top:266.65px;font-size:12px;line-height:12px;color:#000;transform:scaleX(0.9000);">HEA&nbsp;140</span>
<div class="b" style="left:1083.5px;top:265.28749999999997px;width:13.2px;height:13.4px;background:#fff;border:1px solid #3c3c3c;border-radius:1px;box-shadow:inset 0 0 0 0.4px #777;"></div>
<div class="b" style="left:1140.5px;top:265.28749999999997px;width:13.2px;height:13.4px;background:#fff;border:1px solid #3c3c3c;border-radius:1px;box-shadow:inset 0 0 0 0.4px #777;"></div>
<div class="b" style="left:1196.5px;top:265.28749999999997px;width:13.2px;height:13.4px;background:#fff;border:1px solid #3c3c3c;border-radius:1px;box-shadow:inset 0 0 0 0.4px #777;"></div>
<div class="b" style="left:1252.5px;top:265.28749999999997px;width:13.2px;height:13.4px;background:#fff;border:1px solid #3c3c3c;border-radius:1px;box-shadow:inset 0 0 0 0.4px #777;"></div>
<div class="b" style="left:1309.5px;top:265.28749999999997px;width:13.2px;height:13.4px;background:#fff;border:1px solid #3c3c3c;border-radius:1px;box-shadow:inset 0 0 0 0.4px #777;"></div>
<div class="b" style="left:1365.5px;top:265.28749999999997px;width:13.2px;height:13.4px;background:#fff;border:1px solid #3c3c3c;border-radius:1px;box-shadow:inset 0 0 0 0.4px #777;"></div>
<div class="b" style="left:1421.5px;top:265.28749999999997px;width:13.2px;height:13.4px;background:#fff;border:1px solid #3c3c3c;border-radius:1px;box-shadow:inset 0 0 0 0.4px #777;"></div>
<div class="b" style="left:1478.5px;top:265.28749999999997px;width:13.2px;height:13.4px;background:#fff;border:1px solid #3c3c3c;border-radius:1px;box-shadow:inset 0 0 0 0.4px #777;"></div>
<div class="b" style="left:1534.5px;top:265.28749999999997px;width:13.2px;height:13.4px;background:#fff;border:1px solid #3c3c3c;border-radius:1px;box-shadow:inset 0 0 0 0.4px #777;"></div>
<svg width="13" height="13" viewBox="0 0 13 13" style="left:1534.5px;top:265.28749999999997px"><path d="M2.6 6.6 L5.2 9.4 L10.6 3.4" stroke="#2a2a2a" stroke-width="1.25" fill="none"/></svg>
<div class="b" style="left:1590.5px;top:265.28749999999997px;width:13.2px;height:13.4px;background:#fff;border:1px solid #3c3c3c;border-radius:1px;box-shadow:inset 0 0 0 0.4px #777;"></div>
<svg width="13" height="13" viewBox="0 0 13 13" style="left:1590.5px;top:265.28749999999997px"><path d="M2.6 6.6 L5.2 9.4 L10.6 3.4" stroke="#2a2a2a" stroke-width="1.25" fill="none"/></svg>
<span class="t" style="left:1641.55px;top:266.65px;font-size:12px;line-height:12px;color:#000;transform:scaleX(0.9000);">-24.3</span>
<span class="t" style="left:1699.70px;top:266.65px;font-size:12px;line-height:12px;color:#000;transform:scaleX(0.9000);">51.5</span>
<span class="t" style="left:1757.26px;top:266.65px;font-size:12px;line-height:12px;color:#000;transform:scaleX(0.9000);">-6.2</span>
<span class="t" style="left:1809.41px;top:266.65px;font-size:12px;line-height:12px;color:#000;transform:scaleX(0.9000);">161.7</span>
<div class="b" style="left:954.3px;top:299.72px;width:896.2950000000001px;height:1px;background:#eeeeee;"></div>
<span class="t" style="left:976.50px;top:285.81px;font-size:12px;line-height:12px;color:#000;transform:scaleX(0.9000);">6</span>
<span class="t" style="left:1011.16px;top:285.81px;font-size:12px;line-height:12px;color:#000;transform:scaleX(0.9000);">HEA&nbsp;140</span>
<div class="b" style="left:1083.5px;top:284.44250000000005px;width:13.2px;height:13.4px;background:#fff;border:1px solid #3c3c3c;border-radius:1px;box-shadow:inset 0 0 0 0.4px #777;"></div>
<div class="b" style="left:1140.5px;top:284.44250000000005px;width:13.2px;height:13.4px;background:#fff;border:1px solid #3c3c3c;border-radius:1px;box-shadow:inset 0 0 0 0.4px #777;"></div>
<div class="b" style="left:1196.5px;top:284.44250000000005px;width:13.2px;height:13.4px;background:#fff;border:1px solid #3c3c3c;border-radius:1px;box-shadow:inset 0 0 0 0.4px #777;"></div>
<div class="b" style="left:1252.5px;top:284.44250000000005px;width:13.2px;height:13.4px;background:#fff;border:1px solid #3c3c3c;border-radius:1px;box-shadow:inset 0 0 0 0.4px #777;"></div>
<div class="b" style="left:1309.5px;top:284.44250000000005px;width:13.2px;height:13.4px;background:#fff;border:1px solid #3c3c3c;border-radius:1px;box-shadow:inset 0 0 0 0.4px #777;"></div>
<div class="b" style="left:1365.5px;top:284.44250000000005px;width:13.2px;height:13.4px;background:#fff;border:1px solid #3c3c3c;border-radius:1px;box-shadow:inset 0 0 0 0.4px #777;"></div>
<div class="b" style="left:1421.5px;top:284.44250000000005px;width:13.2px;height:13.4px;background:#fff;border:1px solid #3c3c3c;border-radius:1px;box-shadow:inset 0 0 0 0.4px #777;"></div>
<div class="b" style="left:1478.5px;top:284.44250000000005px;width:13.2px;height:13.4px;background:#fff;border:1px solid #3c3c3c;border-radius:1px;box-shadow:inset 0 0 0 0.4px #777;"></div>
<div class="b" style="left:1534.5px;top:284.44250000000005px;width:13.2px;height:13.4px;background:#fff;border:1px solid #3c3c3c;border-radius:1px;box-shadow:inset 0 0 0 0.4px #777;"></div>
<div class="b" style="left:1590.5px;top:284.44250000000005px;width:13.2px;height:13.4px;background:#fff;border:1px solid #3c3c3c;border-radius:1px;box-shadow:inset 0 0 0 0.4px #777;"></div>
<span class="t" style="left:1641.55px;top:285.81px;font-size:12px;line-height:12px;color:#000;transform:scaleX(0.9000);">-24.3</span>
<span class="t" style="left:1699.70px;top:285.81px;font-size:12px;line-height:12px;color:#000;transform:scaleX(0.9000);">15.2</span>
<span class="t" style="left:1757.26px;top:285.81px;font-size:12px;line-height:12px;color:#000;transform:scaleX(0.9000);">-6.2</span>
<span class="t" style="left:1809.41px;top:285.81px;font-size:12px;line-height:12px;color:#000;transform:scaleX(0.9000);">127.8</span>
<div class="b" style="left:954.3px;top:318.875px;width:896.2950000000001px;height:1px;background:#eeeeee;"></div>
<span class="t" style="left:976.50px;top:304.96px;font-size:12px;line-height:12px;color:#000;transform:scaleX(0.9000);">1</span>
<div class="b" style="left:1005.8px;top:300.2px;width:55.4px;height:18.2px;overflow:hidden;">
<span class="t" style="left:-6.84px;top:4.34px;font-size:12px;line-height:12px;transform:scaleX(0.9);transform-origin:0 50%;">Nessun&nbsp;profilo</span></div>
<div class="b" style="left:1083.5px;top:303.5975px;width:13.2px;height:13.4px;background:#fff;border:1px solid #3c3c3c;border-radius:1px;box-shadow:inset 0 0 0 0.4px #777;"></div>
<div class="b" style="left:1140.5px;top:303.5975px;width:13.2px;height:13.4px;background:#fff;border:1px solid #3c3c3c;border-radius:1px;box-shadow:inset 0 0 0 0.4px #777;"></div>
<div class="b" style="left:1196.5px;top:303.5975px;width:13.2px;height:13.4px;background:#fff;border:1px solid #3c3c3c;border-radius:1px;box-shadow:inset 0 0 0 0.4px #777;"></div>
<div class="b" style="left:1252.5px;top:303.5975px;width:13.2px;height:13.4px;background:#fff;border:1px solid #3c3c3c;border-radius:1px;box-shadow:inset 0 0 0 0.4px #777;"></div>
<div class="b" style="left:1309.5px;top:303.5975px;width:13.2px;height:13.4px;background:#fff;border:1px solid #3c3c3c;border-radius:1px;box-shadow:inset 0 0 0 0.4px #777;"></div>
<div class="b" style="left:1365.5px;top:303.5975px;width:13.2px;height:13.4px;background:#fff;border:1px solid #3c3c3c;border-radius:1px;box-shadow:inset 0 0 0 0.4px #777;"></div>
<div class="b" style="left:1421.5px;top:303.5975px;width:13.2px;height:13.4px;background:#fff;border:1px solid #3c3c3c;border-radius:1px;box-shadow:inset 0 0 0 0.4px #777;"></div>
<div class="b" style="left:1478.5px;top:303.5975px;width:13.2px;height:13.4px;background:#fff;border:1px solid #3c3c3c;border-radius:1px;box-shadow:inset 0 0 0 0.4px #777;"></div>
<div class="b" style="left:1534.5px;top:303.5975px;width:13.2px;height:13.4px;background:#fff;border:1px solid #3c3c3c;border-radius:1px;box-shadow:inset 0 0 0 0.4px #777;"></div>
<div class="b" style="left:1590.5px;top:303.5975px;width:13.2px;height:13.4px;background:#fff;border:1px solid #3c3c3c;border-radius:1px;box-shadow:inset 0 0 0 0.4px #777;"></div>
<span class="t" style="left:1641.55px;top:304.96px;font-size:12px;line-height:12px;color:#000;transform:scaleX(0.9000);">-24.2</span>
<span class="t" style="left:1697.91px;top:304.96px;font-size:12px;line-height:12px;color:#000;transform:scaleX(0.9000);">-19.5</span>
<span class="t" style="left:1761.76px;top:304.96px;font-size:12px;line-height:12px;color:#000;transform:scaleX(0.9000);">-6</span>
<span class="t" style="left:1812.41px;top:304.96px;font-size:12px;line-height:12px;color:#000;transform:scaleX(0.9000);">24.8</span>
<div class="b" style="left:954.3px;top:338.03px;width:896.2950000000001px;height:1px;background:#eeeeee;"></div>
<span class="t" style="left:973.49px;top:324.12px;font-size:12px;line-height:12px;color:#000;transform:scaleX(0.9000);">31</span>
<span class="t" style="left:1010.86px;top:324.12px;font-size:12px;line-height:12px;color:#000;transform:scaleX(0.9000);">HEB&nbsp;140</span>
<div class="b" style="left:1083.5px;top:322.7525px;width:13.2px;height:13.4px;background:#fff;border:1px solid #3c3c3c;border-radius:1px;box-shadow:inset 0 0 0 0.4px #777;"></div>
<div class="b" style="left:1140.5px;top:322.7525px;width:13.2px;height:13.4px;background:#fff;border:1px solid #3c3c3c;border-radius:1px;box-shadow:inset 0 0 0 0.4px #777;"></div>
<div class="b" style="left:1196.5px;top:322.7525px;width:13.2px;height:13.4px;background:#fff;border:1px solid #3c3c3c;border-radius:1px;box-shadow:inset 0 0 0 0.4px #777;"></div>
<div class="b" style="left:1252.5px;top:322.7525px;width:13.2px;height:13.4px;background:#fff;border:1px solid #3c3c3c;border-radius:1px;box-shadow:inset 0 0 0 0.4px #777;"></div>
<svg width="13" height="13" viewBox="0 0 13 13" style="left:1252.5px;top:322.7525px"><path d="M2.6 6.6 L5.2 9.4 L10.6 3.4" stroke="#2a2a2a" stroke-width="1.25" fill="none"/></svg>
<div class="b" style="left:1309.5px;top:322.7525px;width:13.2px;height:13.4px;background:#fff;border:1px solid #3c3c3c;border-radius:1px;box-shadow:inset 0 0 0 0.4px #777;"></div>
<svg width="13" height="13" viewBox="0 0 13 13" style="left:1309.5px;top:322.7525px"><path d="M2.6 6.6 L5.2 9.4 L10.6 3.4" stroke="#2a2a2a" stroke-width="1.25" fill="none"/></svg>
<div class="b" style="left:1365.5px;top:322.7525px;width:13.2px;height:13.4px;background:#fff;border:1px solid #3c3c3c;border-radius:1px;box-shadow:inset 0 0 0 0.4px #777;"></div>
<svg width="13" height="13" viewBox="0 0 13 13" style="left:1365.5px;top:322.7525px"><path d="M2.6 6.6 L5.2 9.4 L10.6 3.4" stroke="#2a2a2a" stroke-width="1.25" fill="none"/></svg>
<div class="b" style="left:1421.5px;top:322.7525px;width:13.2px;height:13.4px;background:#fff;border:1px solid #3c3c3c;border-radius:1px;box-shadow:inset 0 0 0 0.4px #777;"></div>
<div class="b" style="left:1478.5px;top:322.7525px;width:13.2px;height:13.4px;background:#fff;border:1px solid #3c3c3c;border-radius:1px;box-shadow:inset 0 0 0 0.4px #777;"></div>
<div class="b" style="left:1534.5px;top:322.7525px;width:13.2px;height:13.4px;background:#fff;border:1px solid #3c3c3c;border-radius:1px;box-shadow:inset 0 0 0 0.4px #777;"></div>
<svg width="13" height="13" viewBox="0 0 13 13" style="left:1534.5px;top:322.7525px"><path d="M2.6 6.6 L5.2 9.4 L10.6 3.4" stroke="#2a2a2a" stroke-width="1.25" fill="none"/></svg>
<div class="b" style="left:1590.5px;top:322.7525px;width:13.2px;height:13.4px;background:#fff;border:1px solid #3c3c3c;border-radius:1px;box-shadow:inset 0 0 0 0.4px #777;"></div>
<svg width="13" height="13" viewBox="0 0 13 13" style="left:1590.5px;top:322.7525px"><path d="M2.6 6.6 L5.2 9.4 L10.6 3.4" stroke="#2a2a2a" stroke-width="1.25" fill="none"/></svg>
<span class="t" style="left:1646.06px;top:324.12px;font-size:12px;line-height:12px;color:#000;transform:scaleX(0.9000);">-24</span>
<span class="t" style="left:1699.70px;top:324.12px;font-size:12px;line-height:12px;color:#000;transform:scaleX(0.9000);">47.7</span>
<span class="t" style="left:1757.26px;top:324.12px;font-size:12px;line-height:12px;color:#000;transform:scaleX(0.9000);">-6.2</span>
<span class="t" style="left:1809.41px;top:324.12px;font-size:12px;line-height:12px;color:#000;transform:scaleX(0.9000);">133.1</span>
<div class="b" style="left:954.3px;top:357.18499999999995px;width:896.2950000000001px;height:1px;background:#eeeeee;"></div>
<span class="t" style="left:973.49px;top:343.27px;font-size:12px;line-height:12px;color:#000;transform:scaleX(0.9000);">33</span>
<span class="t" style="left:1010.86px;top:343.27px;font-size:12px;line-height:12px;color:#000;transform:scaleX(0.9000);">HEB&nbsp;140</span>
<div class="b" style="left:1083.5px;top:341.90749999999997px;width:13.2px;height:13.4px;background:#fff;border:1px solid #3c3c3c;border-radius:1px;box-shadow:inset 0 0 0 0.4px #777;"></div>
<div class="b" style="left:1140.5px;top:341.90749999999997px;width:13.2px;height:13.4px;background:#fff;border:1px solid #3c3c3c;border-radius:1px;box-shadow:inset 0 0 0 0.4px #777;"></div>
<div class="b" style="left:1196.5px;top:341.90749999999997px;width:13.2px;height:13.4px;background:#fff;border:1px solid #3c3c3c;border-radius:1px;box-shadow:inset 0 0 0 0.4px #777;"></div>
<div class="b" style="left:1252.5px;top:341.90749999999997px;width:13.2px;height:13.4px;background:#fff;border:1px solid #3c3c3c;border-radius:1px;box-shadow:inset 0 0 0 0.4px #777;"></div>
<svg width="13" height="13" viewBox="0 0 13 13" style="left:1252.5px;top:341.90749999999997px"><path d="M2.6 6.6 L5.2 9.4 L10.6 3.4" stroke="#2a2a2a" stroke-width="1.25" fill="none"/></svg>
<div class="b" style="left:1309.5px;top:341.90749999999997px;width:13.2px;height:13.4px;background:#fff;border:1px solid #3c3c3c;border-radius:1px;box-shadow:inset 0 0 0 0.4px #777;"></div>
<svg width="13" height="13" viewBox="0 0 13 13" style="left:1309.5px;top:341.90749999999997px"><path d="M2.6 6.6 L5.2 9.4 L10.6 3.4" stroke="#2a2a2a" stroke-width="1.25" fill="none"/></svg>
<div class="b" style="left:1365.5px;top:341.90749999999997px;width:13.2px;height:13.4px;background:#fff;border:1px solid #3c3c3c;border-radius:1px;box-shadow:inset 0 0 0 0.4px #777;"></div>
<svg width="13" height="13" viewBox="0 0 13 13" style="left:1365.5px;top:341.90749999999997px"><path d="M2.6 6.6 L5.2 9.4 L10.6 3.4" stroke="#2a2a2a" stroke-width="1.25" fill="none"/></svg>
<div class="b" style="left:1421.5px;top:341.90749999999997px;width:13.2px;height:13.4px;background:#fff;border:1px solid #3c3c3c;border-radius:1px;box-shadow:inset 0 0 0 0.4px #777;"></div>
<div class="b" style="left:1478.5px;top:341.90749999999997px;width:13.2px;height:13.4px;background:#fff;border:1px solid #3c3c3c;border-radius:1px;box-shadow:inset 0 0 0 0.4px #777;"></div>
<div class="b" style="left:1534.5px;top:341.90749999999997px;width:13.2px;height:13.4px;background:#fff;border:1px solid #3c3c3c;border-radius:1px;box-shadow:inset 0 0 0 0.4px #777;"></div>
<div class="b" style="left:1590.5px;top:341.90749999999997px;width:13.2px;height:13.4px;background:#fff;border:1px solid #3c3c3c;border-radius:1px;box-shadow:inset 0 0 0 0.4px #777;"></div>
<span class="t" style="left:1646.06px;top:343.27px;font-size:12px;line-height:12px;color:#000;transform:scaleX(0.9000);">-24</span>
<span class="t" style="left:1699.70px;top:343.27px;font-size:12px;line-height:12px;color:#000;transform:scaleX(0.9000);">16.1</span>
<span class="t" style="left:1757.26px;top:343.27px;font-size:12px;line-height:12px;color:#000;transform:scaleX(0.9000);">-6.2</span>
<span class="t" style="left:1809.41px;top:343.27px;font-size:12px;line-height:12px;color:#000;transform:scaleX(0.9000);">105.9</span>
<div class="b" style="left:954.3px;top:376.34000000000003px;width:896.2950000000001px;height:1px;background:#eeeeee;"></div>
<span class="t" style="left:973.49px;top:362.43px;font-size:12px;line-height:12px;color:#000;transform:scaleX(0.9000);">12</span>
<span class="t" style="left:1011.16px;top:362.43px;font-size:12px;line-height:12px;color:#000;transform:scaleX(0.9000);">HEA&nbsp;160</span>
<div class="b" style="left:1083.5px;top:361.06250000000006px;width:13.2px;height:13.4px;background:#fff;border:1px solid #3c3c3c;border-radius:1px;box-shadow:inset 0 0 0 0.4px #777;"></div>
<div class="b" style="left:1140.5px;top:361.06250000000006px;width:13.2px;height:13.4px;background:#fff;border:1px solid #3c3c3c;border-radius:1px;box-shadow:inset 0 0 0 0.4px #777;"></div>
<div class="b" style="left:1196.5px;top:361.06250000000006px;width:13.2px;height:13.4px;background:#fff;border:1px solid #3c3c3c;border-radius:1px;box-shadow:inset 0 0 0 0.4px #777;"></div>
<div class="b" style="left:1252.5px;top:361.06250000000006px;width:13.2px;height:13.4px;background:#fff;border:1px solid #3c3c3c;border-radius:1px;box-shadow:inset 0 0 0 0.4px #777;"></div>
<svg width="13" height="13" viewBox="0 0 13 13" style="left:1252.5px;top:361.06250000000006px"><path d="M2.6 6.6 L5.2 9.4 L10.6 3.4" stroke="#2a2a2a" stroke-width="1.25" fill="none"/></svg>
<div class="b" style="left:1309.5px;top:361.06250000000006px;width:13.2px;height:13.4px;background:#fff;border:1px solid #3c3c3c;border-radius:1px;box-shadow:inset 0 0 0 0.4px #777;"></div>
<svg width="13" height="13" viewBox="0 0 13 13" style="left:1309.5px;top:361.06250000000006px"><path d="M2.6 6.6 L5.2 9.4 L10.6 3.4" stroke="#2a2a2a" stroke-width="1.25" fill="none"/></svg>
<div class="b" style="left:1365.5px;top:361.06250000000006px;width:13.2px;height:13.4px;background:#fff;border:1px solid #3c3c3c;border-radius:1px;box-shadow:inset 0 0 0 0.4px #777;"></div>
<svg width="13" height="13" viewBox="0 0 13 13" style="left:1365.5px;top:361.06250000000006px"><path d="M2.6 6.6 L5.2 9.4 L10.6 3.4" stroke="#2a2a2a" stroke-width="1.25" fill="none"/></svg>
<div class="b" style="left:1421.5px;top:361.06250000000006px;width:13.2px;height:13.4px;background:#fff;border:1px solid #3c3c3c;border-radius:1px;box-shadow:inset 0 0 0 0.4px #777;"></div>
<div class="b" style="left:1478.5px;top:361.06250000000006px;width:13.2px;height:13.4px;background:#fff;border:1px solid #3c3c3c;border-radius:1px;box-shadow:inset 0 0 0 0.4px #777;"></div>
<div class="b" style="left:1534.5px;top:361.06250000000006px;width:13.2px;height:13.4px;background:#fff;border:1px solid #3c3c3c;border-radius:1px;box-shadow:inset 0 0 0 0.4px #777;"></div>
<div class="b" style="left:1590.5px;top:361.06250000000006px;width:13.2px;height:13.4px;background:#fff;border:1px solid #3c3c3c;border-radius:1px;box-shadow:inset 0 0 0 0.4px #777;"></div>
<span class="t" style="left:1641.55px;top:362.43px;font-size:12px;line-height:12px;color:#000;transform:scaleX(0.9000);">-23.9</span>
<span class="t" style="left:1699.70px;top:362.43px;font-size:12px;line-height:12px;color:#000;transform:scaleX(0.9000);">24.5</span>
<span class="t" style="left:1757.26px;top:362.43px;font-size:12px;line-height:12px;color:#000;transform:scaleX(0.9000);">-6.2</span>
<span class="t" style="left:1809.41px;top:362.43px;font-size:12px;line-height:12px;color:#000;transform:scaleX(0.9000);">193.4</span>
<div class="b" style="left:954.3px;top:395.495px;width:896.2950000000001px;height:1px;background:#eeeeee;"></div>
<span class="t" style="left:973.49px;top:381.58px;font-size:12px;line-height:12px;color:#000;transform:scaleX(0.9000);">13</span>
<span class="t" style="left:1011.16px;top:381.58px;font-size:12px;line-height:12px;color:#000;transform:scaleX(0.9000);">HEA&nbsp;160</span>
<div class="b" style="left:1083.5px;top:380.21750000000003px;width:13.2px;height:13.4px;background:#fff;border:1px solid #3c3c3c;border-radius:1px;box-shadow:inset 0 0 0 0.4px #777;"></div>
<div class="b" style="left:1140.5px;top:380.21750000000003px;width:13.2px;height:13.4px;background:#fff;border:1px solid #3c3c3c;border-radius:1px;box-shadow:inset 0 0 0 0.4px #777;"></div>
<div class="b" style="left:1196.5px;top:380.21750000000003px;width:13.2px;height:13.4px;background:#fff;border:1px solid #3c3c3c;border-radius:1px;box-shadow:inset 0 0 0 0.4px #777;"></div>
<div class="b" style="left:1252.5px;top:380.21750000000003px;width:13.2px;height:13.4px;background:#fff;border:1px solid #3c3c3c;border-radius:1px;box-shadow:inset 0 0 0 0.4px #777;"></div>
<svg width="13" height="13" viewBox="0 0 13 13" style="left:1252.5px;top:380.21750000000003px"><path d="M2.6 6.6 L5.2 9.4 L10.6 3.4" stroke="#2a2a2a" stroke-width="1.25" fill="none"/></svg>
<div class="b" style="left:1309.5px;top:380.21750000000003px;width:13.2px;height:13.4px;background:#fff;border:1px solid #3c3c3c;border-radius:1px;box-shadow:inset 0 0 0 0.4px #777;"></div>
<svg width="13" height="13" viewBox="0 0 13 13" style="left:1309.5px;top:380.21750000000003px"><path d="M2.6 6.6 L5.2 9.4 L10.6 3.4" stroke="#2a2a2a" stroke-width="1.25" fill="none"/></svg>
<div class="b" style="left:1365.5px;top:380.21750000000003px;width:13.2px;height:13.4px;background:#fff;border:1px solid #3c3c3c;border-radius:1px;box-shadow:inset 0 0 0 0.4px #777;"></div>
<svg width="13" height="13" viewBox="0 0 13 13" style="left:1365.5px;top:380.21750000000003px"><path d="M2.6 6.6 L5.2 9.4 L10.6 3.4" stroke="#2a2a2a" stroke-width="1.25" fill="none"/></svg>
<div class="b" style="left:1421.5px;top:380.21750000000003px;width:13.2px;height:13.4px;background:#fff;border:1px solid #3c3c3c;border-radius:1px;box-shadow:inset 0 0 0 0.4px #777;"></div>
<div class="b" style="left:1478.5px;top:380.21750000000003px;width:13.2px;height:13.4px;background:#fff;border:1px solid #3c3c3c;border-radius:1px;box-shadow:inset 0 0 0 0.4px #777;"></div>
<div class="b" style="left:1534.5px;top:380.21750000000003px;width:13.2px;height:13.4px;background:#fff;border:1px solid #3c3c3c;border-radius:1px;box-shadow:inset 0 0 0 0.4px #777;"></div>
<svg width="13" height="13" viewBox="0 0 13 13" style="left:1534.5px;top:380.21750000000003px"><path d="M2.6 6.6 L5.2 9.4 L10.6 3.4" stroke="#2a2a2a" stroke-width="1.25" fill="none"/></svg>
<div class="b" style="left:1590.5px;top:380.21750000000003px;width:13.2px;height:13.4px;background:#fff;border:1px solid #3c3c3c;border-radius:1px;box-shadow:inset 0 0 0 0.4px #777;"></div>
<svg width="13" height="13" viewBox="0 0 13 13" style="left:1590.5px;top:380.21750000000003px"><path d="M2.6 6.6 L5.2 9.4 L10.6 3.4" stroke="#2a2a2a" stroke-width="1.25" fill="none"/></svg>
<span class="t" style="left:1641.55px;top:381.58px;font-size:12px;line-height:12px;color:#000;transform:scaleX(0.9000);">-23.9</span>
<span class="t" style="left:1699.70px;top:381.58px;font-size:12px;line-height:12px;color:#000;transform:scaleX(0.9000);">54.2</span>
<span class="t" style="left:1757.26px;top:381.58px;font-size:12px;line-height:12px;color:#000;transform:scaleX(0.9000);">-6.2</span>
<span class="t" style="left:1809.41px;top:381.58px;font-size:12px;line-height:12px;color:#000;transform:scaleX(0.9000);">138.2</span>
<div class="b" style="left:954.3px;top:414.65px;width:896.2950000000001px;height:1px;background:#eeeeee;"></div>
<span class="t" style="left:976.50px;top:400.74px;font-size:12px;line-height:12px;color:#000;transform:scaleX(0.9000);">8</span>
<span class="t" style="left:1011.16px;top:400.74px;font-size:12px;line-height:12px;color:#000;transform:scaleX(0.9000);">HEA&nbsp;140</span>
<div class="b" style="left:1083.5px;top:399.3725px;width:13.2px;height:13.4px;background:#fff;border:1px solid #3c3c3c;border-radius:1px;box-shadow:inset 0 0 0 0.4px #777;"></div>
<svg width="13" height="13" viewBox="0 0 13 13" style="left:1083.5px;top:399.3725px"><path d="M2.6 6.6 L5.2 9.4 L10.6 3.4" stroke="#2a2a2a" stroke-width="1.25" fill="none"/></svg>
<div class="b" style="left:1140.5px;top:399.3725px;width:13.2px;height:13.4px;background:#fff;border:1px solid #3c3c3c;border-radius:1px;box-shadow:inset 0 0 0 0.4px #777;"></div>
<svg width="13" height="13" viewBox="0 0 13 13" style="left:1140.5px;top:399.3725px"><path d="M2.6 6.6 L5.2 9.4 L10.6 3.4" stroke="#2a2a2a" stroke-width="1.25" fill="none"/></svg>
<div class="b" style="left:1196.5px;top:399.3725px;width:13.2px;height:13.4px;background:#fff;border:1px solid #3c3c3c;border-radius:1px;box-shadow:inset 0 0 0 0.4px #777;"></div>
<svg width="13" height="13" viewBox="0 0 13 13" style="left:1196.5px;top:399.3725px"><path d="M2.6 6.6 L5.2 9.4 L10.6 3.4" stroke="#2a2a2a" stroke-width="1.25" fill="none"/></svg>
<div class="b" style="left:1252.5px;top:399.3725px;width:13.2px;height:13.4px;background:#fff;border:1px solid #3c3c3c;border-radius:1px;box-shadow:inset 0 0 0 0.4px #777;"></div>
<div class="b" style="left:1309.5px;top:399.3725px;width:13.2px;height:13.4px;background:#fff;border:1px solid #3c3c3c;border-radius:1px;box-shadow:inset 0 0 0 0.4px #777;"></div>
<div class="b" style="left:1365.5px;top:399.3725px;width:13.2px;height:13.4px;background:#fff;border:1px solid #3c3c3c;border-radius:1px;box-shadow:inset 0 0 0 0.4px #777;"></div>
<div class="b" style="left:1421.5px;top:399.3725px;width:13.2px;height:13.4px;background:#fff;border:1px solid #3c3c3c;border-radius:1px;box-shadow:inset 0 0 0 0.4px #777;"></div>
<div class="b" style="left:1478.5px;top:399.3725px;width:13.2px;height:13.4px;background:#fff;border:1px solid #3c3c3c;border-radius:1px;box-shadow:inset 0 0 0 0.4px #777;"></div>
<div class="b" style="left:1534.5px;top:399.3725px;width:13.2px;height:13.4px;background:#fff;border:1px solid #3c3c3c;border-radius:1px;box-shadow:inset 0 0 0 0.4px #777;"></div>
<svg width="13" height="13" viewBox="0 0 13 13" style="left:1534.5px;top:399.3725px"><path d="M2.6 6.6 L5.2 9.4 L10.6 3.4" stroke="#2a2a2a" stroke-width="1.25" fill="none"/></svg>
<div class="b" style="left:1590.5px;top:399.3725px;width:13.2px;height:13.4px;background:#fff;border:1px solid #3c3c3c;border-radius:1px;box-shadow:inset 0 0 0 0.4px #777;"></div>
<svg width="13" height="13" viewBox="0 0 13 13" style="left:1590.5px;top:399.3725px"><path d="M2.6 6.6 L5.2 9.4 L10.6 3.4" stroke="#2a2a2a" stroke-width="1.25" fill="none"/></svg>
<span class="t" style="left:1641.55px;top:400.74px;font-size:12px;line-height:12px;color:#000;transform:scaleX(0.9000);">-23.4</span>
<span class="t" style="left:1699.70px;top:400.74px;font-size:12px;line-height:12px;color:#000;transform:scaleX(0.9000);">66.1</span>
<span class="t" style="left:1757.26px;top:400.74px;font-size:12px;line-height:12px;color:#000;transform:scaleX(0.9000);">-6.2</span>
<span class="t" style="left:1809.41px;top:400.74px;font-size:12px;line-height:12px;color:#000;transform:scaleX(0.9000);">183.8</span>
<div class="b" style="left:954.3px;top:433.80499999999995px;width:896.2950000000001px;height:1px;background:#eeeeee;"></div>
<span class="t" style="left:973.49px;top:419.89px;font-size:12px;line-height:12px;color:#000;transform:scaleX(0.9000);">10</span>
<span class="t" style="left:1011.16px;top:419.89px;font-size:12px;line-height:12px;color:#000;transform:scaleX(0.9000);">HEA&nbsp;140</span>
<div class="b" style="left:1083.5px;top:418.5275px;width:13.2px;height:13.4px;background:#fff;border:1px solid #3c3c3c;border-radius:1px;box-shadow:inset 0 0 0 0.4px #777;"></div>
<svg width="13" height="13" viewBox="0 0 13 13" style="left:1083.5px;top:418.5275px"><path d="M2.6 6.6 L5.2 9.4 L10.6 3.4" stroke="#2a2a2a" stroke-width="1.25" fill="none"/></svg>
<div class="b" style="left:1140.5px;top:418.5275px;width:13.2px;height:13.4px;background:#fff;border:1px solid #3c3c3c;border-radius:1px;box-shadow:inset 0 0 0 0.4px #777;"></div>
<svg width="13" height="13" viewBox="0 0 13 13" style="left:1140.5px;top:418.5275px"><path d="M2.6 6.6 L5.2 9.4 L10.6 3.4" stroke="#2a2a2a" stroke-width="1.25" fill="none"/></svg>
<div class="b" style="left:1196.5px;top:418.5275px;width:13.2px;height:13.4px;background:#fff;border:1px solid #3c3c3c;border-radius:1px;box-shadow:inset 0 0 0 0.4px #777;"></div>
<svg width="13" height="13" viewBox="0 0 13 13" style="left:1196.5px;top:418.5275px"><path d="M2.6 6.6 L5.2 9.4 L10.6 3.4" stroke="#2a2a2a" stroke-width="1.25" fill="none"/></svg>
<div class="b" style="left:1252.5px;top:418.5275px;width:13.2px;height:13.4px;background:#fff;border:1px solid #3c3c3c;border-radius:1px;box-shadow:inset 0 0 0 0.4px #777;"></div>
<div class="b" style="left:1309.5px;top:418.5275px;width:13.2px;height:13.4px;background:#fff;border:1px solid #3c3c3c;border-radius:1px;box-shadow:inset 0 0 0 0.4px #777;"></div>
<div class="b" style="left:1365.5px;top:418.5275px;width:13.2px;height:13.4px;background:#fff;border:1px solid #3c3c3c;border-radius:1px;box-shadow:inset 0 0 0 0.4px #777;"></div>
<div class="b" style="left:1421.5px;top:418.5275px;width:13.2px;height:13.4px;background:#fff;border:1px solid #3c3c3c;border-radius:1px;box-shadow:inset 0 0 0 0.4px #777;"></div>
<div class="b" style="left:1478.5px;top:418.5275px;width:13.2px;height:13.4px;background:#fff;border:1px solid #3c3c3c;border-radius:1px;box-shadow:inset 0 0 0 0.4px #777;"></div>
<div class="b" style="left:1534.5px;top:418.5275px;width:13.2px;height:13.4px;background:#fff;border:1px solid #3c3c3c;border-radius:1px;box-shadow:inset 0 0 0 0.4px #777;"></div>
<div class="b" style="left:1590.5px;top:418.5275px;width:13.2px;height:13.4px;background:#fff;border:1px solid #3c3c3c;border-radius:1px;box-shadow:inset 0 0 0 0.4px #777;"></div>
<span class="t" style="left:1641.55px;top:419.89px;font-size:12px;line-height:12px;color:#000;transform:scaleX(0.9000);">-23.4</span>
<span class="t" style="left:1704.21px;top:419.89px;font-size:12px;line-height:12px;color:#000;transform:scaleX(0.9000);">23</span>
<span class="t" style="left:1757.26px;top:419.89px;font-size:12px;line-height:12px;color:#000;transform:scaleX(0.9000);">-6.2</span>
<span class="t" style="left:1809.41px;top:419.89px;font-size:12px;line-height:12px;color:#000;transform:scaleX(0.9000);">206.9</span>
<div class="b" style="left:954.3px;top:452.96000000000004px;width:896.2950000000001px;height:1px;background:#eeeeee;"></div>
<span class="t" style="left:973.49px;top:439.05px;font-size:12px;line-height:12px;color:#000;transform:scaleX(0.9000);">29</span>
<span class="t" style="left:1010.86px;top:439.05px;font-size:12px;line-height:12px;color:#000;transform:scaleX(0.9000);">HEB&nbsp;140</span>
<div class="b" style="left:1083.5px;top:437.68250000000006px;width:13.2px;height:13.4px;background:#fff;border:1px solid #3c3c3c;border-radius:1px;box-shadow:inset 0 0 0 0.4px #777;"></div>
<div class="b" style="left:1140.5px;top:437.68250000000006px;width:13.2px;height:13.4px;background:#fff;border:1px solid #3c3c3c;border-radius:1px;box-shadow:inset 0 0 0 0.4px #777;"></div>
<div class="b" style="left:1196.5px;top:437.68250000000006px;width:13.2px;height:13.4px;background:#fff;border:1px solid #3c3c3c;border-radius:1px;box-shadow:inset 0 0 0 0.4px #777;"></div>
<div class="b" style="left:1252.5px;top:437.68250000000006px;width:13.2px;height:13.4px;background:#fff;border:1px solid #3c3c3c;border-radius:1px;box-shadow:inset 0 0 0 0.4px #777;"></div>
<div class="b" style="left:1309.5px;top:437.68250000000006px;width:13.2px;height:13.4px;background:#fff;border:1px solid #3c3c3c;border-radius:1px;box-shadow:inset 0 0 0 0.4px #777;"></div>
<div class="b" style="left:1365.5px;top:437.68250000000006px;width:13.2px;height:13.4px;background:#fff;border:1px solid #3c3c3c;border-radius:1px;box-shadow:inset 0 0 0 0.4px #777;"></div>
<div class="b" style="left:1421.5px;top:437.68250000000006px;width:13.2px;height:13.4px;background:#fff;border:1px solid #3c3c3c;border-radius:1px;box-shadow:inset 0 0 0 0.4px #777;"></div>
<div class="b" style="left:1478.5px;top:437.68250000000006px;width:13.2px;height:13.4px;background:#fff;border:1px solid #3c3c3c;border-radius:1px;box-shadow:inset 0 0 0 0.4px #777;"></div>
<div class="b" style="left:1534.5px;top:437.68250000000006px;width:13.2px;height:13.4px;background:#fff;border:1px solid #3c3c3c;border-radius:1px;box-shadow:inset 0 0 0 0.4px #777;"></div>
<svg width="13" height="13" viewBox="0 0 13 13" style="left:1534.5px;top:437.68250000000006px"><path d="M2.6 6.6 L5.2 9.4 L10.6 3.4" stroke="#2a2a2a" stroke-width="1.25" fill="none"/></svg>
<div class="b" style="left:1590.5px;top:437.68250000000006px;width:13.2px;height:13.4px;background:#fff;border:1px solid #3c3c3c;border-radius:1px;box-shadow:inset 0 0 0 0.4px #777;"></div>
<svg width="13" height="13" viewBox="0 0 13 13" style="left:1590.5px;top:437.68250000000006px"><path d="M2.6 6.6 L5.2 9.4 L10.6 3.4" stroke="#2a2a2a" stroke-width="1.25" fill="none"/></svg>
<span class="t" style="left:1641.55px;top:439.05px;font-size:12px;line-height:12px;color:#000;transform:scaleX(0.9000);">-22.8</span>
<span class="t" style="left:1699.70px;top:439.05px;font-size:12px;line-height:12px;color:#000;transform:scaleX(0.9000);">59.5</span>
<span class="t" style="left:1757.26px;top:439.05px;font-size:12px;line-height:12px;color:#000;transform:scaleX(0.9000);">-6.2</span>
<span class="t" style="left:1809.41px;top:439.05px;font-size:12px;line-height:12px;color:#000;transform:scaleX(0.9000);">172.2</span>
<div class="b" style="left:954.3px;top:472.115px;width:896.2950000000001px;height:1px;background:#eeeeee;"></div>
<span class="t" style="left:973.49px;top:458.20px;font-size:12px;line-height:12px;color:#000;transform:scaleX(0.9000);">30</span>
<span class="t" style="left:1010.86px;top:458.20px;font-size:12px;line-height:12px;color:#000;transform:scaleX(0.9000);">HEB&nbsp;140</span>
<div class="b" style="left:1083.5px;top:456.83750000000003px;width:13.2px;height:13.4px;background:#fff;border:1px solid #3c3c3c;border-radius:1px;box-shadow:inset 0 0 0 0.4px #777;"></div>
<div class="b" style="left:1140.5px;top:456.83750000000003px;width:13.2px;height:13.4px;background:#fff;border:1px solid #3c3c3c;border-radius:1px;box-shadow:inset 0 0 0 0.4px #777;"></div>
<div class="b" style="left:1196.5px;top:456.83750000000003px;width:13.2px;height:13.4px;background:#fff;border:1px solid #3c3c3c;border-radius:1px;box-shadow:inset 0 0 0 0.4px #777;"></div>
<div class="b" style="left:1252.5px;top:456.83750000000003px;width:13.2px;height:13.4px;background:#fff;border:1px solid #3c3c3c;border-radius:1px;box-shadow:inset 0 0 0 0.4px #777;"></div>
<div class="b" style="left:1309.5px;top:456.83750000000003px;width:13.2px;height:13.4px;background:#fff;border:1px solid #3c3c3c;border-radius:1px;box-shadow:inset 0 0 0 0.4px #777;"></div>
<div class="b" style="left:1365.5px;top:456.83750000000003px;width:13.2px;height:13.4px;background:#fff;border:1px solid #3c3c3c;border-radius:1px;box-shadow:inset 0 0 0 0.4px #777;"></div>
<div class="b" style="left:1421.5px;top:456.83750000000003px;width:13.2px;height:13.4px;background:#fff;border:1px solid #3c3c3c;border-radius:1px;box-shadow:inset 0 0 0 0.4px #777;"></div>
<div class="b" style="left:1478.5px;top:456.83750000000003px;width:13.2px;height:13.4px;background:#fff;border:1px solid #3c3c3c;border-radius:1px;box-shadow:inset 0 0 0 0.4px #777;"></div>
<div class="b" style="left:1534.5px;top:456.83750000000003px;width:13.2px;height:13.4px;background:#fff;border:1px solid #3c3c3c;border-radius:1px;box-shadow:inset 0 0 0 0.4px #777;"></div>
<div class="b" style="left:1590.5px;top:456.83750000000003px;width:13.2px;height:13.4px;background:#fff;border:1px solid #3c3c3c;border-radius:1px;box-shadow:inset 0 0 0 0.4px #777;"></div>
<span class="t" style="left:1641.55px;top:458.20px;font-size:12px;line-height:12px;color:#000;transform:scaleX(0.9000);">-22.8</span>
<span class="t" style="left:1699.70px;top:458.20px;font-size:12px;line-height:12px;color:#000;transform:scaleX(0.9000);">23.1</span>
<span class="t" style="left:1757.26px;top:458.20px;font-size:12px;line-height:12px;color:#000;transform:scaleX(0.9000);">-6.2</span>
<span class="t" style="left:1809.41px;top:458.20px;font-size:12px;line-height:12px;color:#000;transform:scaleX(0.9000);">154.9</span>
<div class="b" style="left:954.3px;top:491.27px;width:896.2950000000001px;height:1px;background:#eeeeee;"></div>
<span class="t" style="left:973.89px;top:477.36px;font-size:12px;line-height:12px;color:#000;transform:scaleX(0.9000);">11</span>
<span class="t" style="left:1011.16px;top:477.36px;font-size:12px;line-height:12px;color:#000;transform:scaleX(0.9000);">HEA&nbsp;160</span>
<div class="b" style="left:1083.5px;top:475.9925px;width:13.2px;height:13.4px;background:#fff;border:1px solid #3c3c3c;border-radius:1px;box-shadow:inset 0 0 0 0.4px #777;"></div>
<div class="b" style="left:1140.5px;top:475.9925px;width:13.2px;height:13.4px;background:#fff;border:1px solid #3c3c3c;border-radius:1px;box-shadow:inset 0 0 0 0.4px #777;"></div>
<div class="b" style="left:1196.5px;top:475.9925px;width:13.2px;height:13.4px;background:#fff;border:1px solid #3c3c3c;border-radius:1px;box-shadow:inset 0 0 0 0.4px #777;"></div>
<div class="b" style="left:1252.5px;top:475.9925px;width:13.2px;height:13.4px;background:#fff;border:1px solid #3c3c3c;border-radius:1px;box-shadow:inset 0 0 0 0.4px #777;"></div>
<div class="b" style="left:1309.5px;top:475.9925px;width:13.2px;height:13.4px;background:#fff;border:1px solid #3c3c3c;border-radius:1px;box-shadow:inset 0 0 0 0.4px #777;"></div>
<div class="b" style="left:1365.5px;top:475.9925px;width:13.2px;height:13.4px;background:#fff;border:1px solid #3c3c3c;border-radius:1px;box-shadow:inset 0 0 0 0.4px #777;"></div>
<div class="b" style="left:1421.5px;top:475.9925px;width:13.2px;height:13.4px;background:#fff;border:1px solid #3c3c3c;border-radius:1px;box-shadow:inset 0 0 0 0.4px #777;"></div>
<div class="b" style="left:1478.5px;top:475.9925px;width:13.2px;height:13.4px;background:#fff;border:1px solid #3c3c3c;border-radius:1px;box-shadow:inset 0 0 0 0.4px #777;"></div>
<div class="b" style="left:1534.5px;top:475.9925px;width:13.2px;height:13.4px;background:#fff;border:1px solid #3c3c3c;border-radius:1px;box-shadow:inset 0 0 0 0.4px #777;"></div>
<div class="b" style="left:1590.5px;top:475.9925px;width:13.2px;height:13.4px;background:#fff;border:1px solid #3c3c3c;border-radius:1px;box-shadow:inset 0 0 0 0.4px #777;"></div>
<span class="t" style="left:1641.55px;top:477.36px;font-size:12px;line-height:12px;color:#000;transform:scaleX(0.9000);">-22.6</span>
<span class="t" style="left:1699.70px;top:477.36px;font-size:12px;line-height:12px;color:#000;transform:scaleX(0.9000);">32.8</span>
<span class="t" style="left:1757.26px;top:477.36px;font-size:12px;line-height:12px;color:#000;transform:scaleX(0.9000);">-6.2</span>
<span class="t" style="left:1809.41px;top:477.36px;font-size:12px;line-height:12px;color:#000;transform:scaleX(0.9000);">240.6</span>
<div class="b" style="left:954.3px;top:510.42499999999995px;width:896.2950000000001px;height:1px;background:#eeeeee;"></div>
<span class="t" style="left:973.49px;top:496.51px;font-size:12px;line-height:12px;color:#000;transform:scaleX(0.9000);">15</span>
<span class="t" style="left:1011.16px;top:496.51px;font-size:12px;line-height:12px;color:#000;transform:scaleX(0.9000);">HEA&nbsp;160</span>
<div class="b" style="left:1083.5px;top:495.1475px;width:13.2px;height:13.4px;background:#fff;border:1px solid #3c3c3c;border-radius:1px;box-shadow:inset 0 0 0 0.4px #777;"></div>
<div class="b" style="left:1140.5px;top:495.1475px;width:13.2px;height:13.4px;background:#fff;border:1px solid #3c3c3c;border-radius:1px;box-shadow:inset 0 0 0 0.4px #777;"></div>
<div class="b" style="left:1196.5px;top:495.1475px;width:13.2px;height:13.4px;background:#fff;border:1px solid #3c3c3c;border-radius:1px;box-shadow:inset 0 0 0 0.4px #777;"></div>
<div class="b" style="left:1252.5px;top:495.1475px;width:13.2px;height:13.4px;background:#fff;border:1px solid #3c3c3c;border-radius:1px;box-shadow:inset 0 0 0 0.4px #777;"></div>
<div class="b" style="left:1309.5px;top:495.1475px;width:13.2px;height:13.4px;background:#fff;border:1px solid #3c3c3c;border-radius:1px;box-shadow:inset 0 0 0 0.4px #777;"></div>
<div class="b" style="left:1365.5px;top:495.1475px;width:13.2px;height:13.4px;background:#fff;border:1px solid #3c3c3c;border-radius:1px;box-shadow:inset 0 0 0 0.4px #777;"></div>
<div class="b" style="left:1421.5px;top:495.1475px;width:13.2px;height:13.4px;background:#fff;border:1px solid #3c3c3c;border-radius:1px;box-shadow:inset 0 0 0 0.4px #777;"></div>
<div class="b" style="left:1478.5px;top:495.1475px;width:13.2px;height:13.4px;background:#fff;border:1px solid #3c3c3c;border-radius:1px;box-shadow:inset 0 0 0 0.4px #777;"></div>
<div class="b" style="left:1534.5px;top:495.1475px;width:13.2px;height:13.4px;background:#fff;border:1px solid #3c3c3c;border-radius:1px;box-shadow:inset 0 0 0 0.4px #777;"></div>
<svg width="13" height="13" viewBox="0 0 13 13" style="left:1534.5px;top:495.1475px"><path d="M2.6 6.6 L5.2 9.4 L10.6 3.4" stroke="#2a2a2a" stroke-width="1.25" fill="none"/></svg>
<div class="b" style="left:1590.5px;top:495.1475px;width:13.2px;height:13.4px;background:#fff;border:1px solid #3c3c3c;border-radius:1px;box-shadow:inset 0 0 0 0.4px #777;"></div>
<svg width="13" height="13" viewBox="0 0 13 13" style="left:1590.5px;top:495.1475px"><path d="M2.6 6.6 L5.2 9.4 L10.6 3.4" stroke="#2a2a2a" stroke-width="1.25" fill="none"/></svg>
<span class="t" style="left:1641.55px;top:496.51px;font-size:12px;line-height:12px;color:#000;transform:scaleX(0.9000);">-22.6</span>
<span class="t" style="left:1699.70px;top:496.51px;font-size:12px;line-height:12px;color:#000;transform:scaleX(0.9000);">66.9</span>
<span class="t" style="left:1757.26px;top:496.51px;font-size:12px;line-height:12px;color:#000;transform:scaleX(0.9000);">-6.2</span>
<span class="t" style="left:1809.41px;top:496.51px;font-size:12px;line-height:12px;color:#000;transform:scaleX(0.9000);">178.9</span>
<div class="b" style="left:954.3px;top:529.58px;width:896.2950000000001px;height:1px;background:#eeeeee;"></div>
<span class="t" style="left:973.49px;top:515.67px;font-size:12px;line-height:12px;color:#000;transform:scaleX(0.9000);">21</span>
<span class="t" style="left:1011.16px;top:515.67px;font-size:12px;line-height:12px;color:#000;transform:scaleX(0.9000);">HEA&nbsp;180</span>
<div class="b" style="left:1083.5px;top:514.3025px;width:13.2px;height:13.4px;background:#fff;border:1px solid #3c3c3c;border-radius:1px;box-shadow:inset 0 0 0 0.4px #777;"></div>
<div class="b" style="left:1140.5px;top:514.3025px;width:13.2px;height:13.4px;background:#fff;border:1px solid #3c3c3c;border-radius:1px;box-shadow:inset 0 0 0 0.4px #777;"></div>
<div class="b" style="left:1196.5px;top:514.3025px;width:13.2px;height:13.4px;background:#fff;border:1px solid #3c3c3c;border-radius:1px;box-shadow:inset 0 0 0 0.4px #777;"></div>
<div class="b" style="left:1252.5px;top:514.3025px;width:13.2px;height:13.4px;background:#fff;border:1px solid #3c3c3c;border-radius:1px;box-shadow:inset 0 0 0 0.4px #777;"></div>
<svg width="13" height="13" viewBox="0 0 13 13" style="left:1252.5px;top:514.3025px"><path d="M2.6 6.6 L5.2 9.4 L10.6 3.4" stroke="#2a2a2a" stroke-width="1.25" fill="none"/></svg>
<div class="b" style="left:1309.5px;top:514.3025px;width:13.2px;height:13.4px;background:#fff;border:1px solid #3c3c3c;border-radius:1px;box-shadow:inset 0 0 0 0.4px #777;"></div>
<svg width="13" height="13" viewBox="0 0 13 13" style="left:1309.5px;top:514.3025px"><path d="M2.6 6.6 L5.2 9.4 L10.6 3.4" stroke="#2a2a2a" stroke-width="1.25" fill="none"/></svg>
<div class="b" style="left:1365.5px;top:514.3025px;width:13.2px;height:13.4px;background:#fff;border:1px solid #3c3c3c;border-radius:1px;box-shadow:inset 0 0 0 0.4px #777;"></div>
<svg width="13" height="13" viewBox="0 0 13 13" style="left:1365.5px;top:514.3025px"><path d="M2.6 6.6 L5.2 9.4 L10.6 3.4" stroke="#2a2a2a" stroke-width="1.25" fill="none"/></svg>
<div class="b" style="left:1421.5px;top:514.3025px;width:13.2px;height:13.4px;background:#fff;border:1px solid #3c3c3c;border-radius:1px;box-shadow:inset 0 0 0 0.4px #777;"></div>
<div class="b" style="left:1478.5px;top:514.3025px;width:13.2px;height:13.4px;background:#fff;border:1px solid #3c3c3c;border-radius:1px;box-shadow:inset 0 0 0 0.4px #777;"></div>
<div class="b" style="left:1534.5px;top:514.3025px;width:13.2px;height:13.4px;background:#fff;border:1px solid #3c3c3c;border-radius:1px;box-shadow:inset 0 0 0 0.4px #777;"></div>
<svg width="13" height="13" viewBox="0 0 13 13" style="left:1534.5px;top:514.3025px"><path d="M2.6 6.6 L5.2 9.4 L10.6 3.4" stroke="#2a2a2a" stroke-width="1.25" fill="none"/></svg>
<div class="b" style="left:1590.5px;top:514.3025px;width:13.2px;height:13.4px;background:#fff;border:1px solid #3c3c3c;border-radius:1px;box-shadow:inset 0 0 0 0.4px #777;"></div>
<svg width="13" height="13" viewBox="0 0 13 13" style="left:1590.5px;top:514.3025px"><path d="M2.6 6.6 L5.2 9.4 L10.6 3.4" stroke="#2a2a2a" stroke-width="1.25" fill="none"/></svg>
<span class="t" style="left:1641.55px;top:515.67px;font-size:12px;line-height:12px;color:#000;transform:scaleX(0.9000);">-22.2</span>
<span class="t" style="left:1704.21px;top:515.67px;font-size:12px;line-height:12px;color:#000;transform:scaleX(0.9000);">69</span>
<span class="t" style="left:1757.26px;top:515.67px;font-size:12px;line-height:12px;color:#000;transform:scaleX(0.9000);">-6.3</span>
<span class="t" style="left:1813.91px;top:515.67px;font-size:12px;line-height:12px;color:#000;transform:scaleX(0.9000);">164</span>
<div class="b" style="left:954.3px;top:548.735px;width:896.2950000000001px;height:1px;background:#eeeeee;"></div>
<span class="t" style="left:973.49px;top:534.82px;font-size:12px;line-height:12px;color:#000;transform:scaleX(0.9000);">23</span>
<span class="t" style="left:1011.16px;top:534.82px;font-size:12px;line-height:12px;color:#000;transform:scaleX(0.9000);">HEA&nbsp;180</span>
<div class="b" style="left:1083.5px;top:533.4575px;width:13.2px;height:13.4px;background:#fff;border:1px solid #3c3c3c;border-radius:1px;box-shadow:inset 0 0 0 0.4px #777;"></div>
<div class="b" style="left:1140.5px;top:533.4575px;width:13.2px;height:13.4px;background:#fff;border:1px solid #3c3c3c;border-radius:1px;box-shadow:inset 0 0 0 0.4px #777;"></div>
<div class="b" style="left:1196.5px;top:533.4575px;width:13.2px;height:13.4px;background:#fff;border:1px solid #3c3c3c;border-radius:1px;box-shadow:inset 0 0 0 0.4px #777;"></div>
<div class="b" style="left:1252.5px;top:533.4575px;width:13.2px;height:13.4px;background:#fff;border:1px solid #3c3c3c;border-radius:1px;box-shadow:inset 0 0 0 0.4px #777;"></div>
<svg width="13" height="13" viewBox="0 0 13 13" style="left:1252.5px;top:533.4575px"><path d="M2.6 6.6 L5.2 9.4 L10.6 3.4" stroke="#2a2a2a" stroke-width="1.25" fill="none"/></svg>
<div class="b" style="left:1309.5px;top:533.4575px;width:13.2px;height:13.4px;background:#fff;border:1px solid #3c3c3c;border-radius:1px;box-shadow:inset 0 0 0 0.4px #777;"></div>
<svg width="13" height="13" viewBox="0 0 13 13" style="left:1309.5px;top:533.4575px"><path d="M2.6 6.6 L5.2 9.4 L10.6 3.4" stroke="#2a2a2a" stroke-width="1.25" fill="none"/></svg>
<div class="b" style="left:1365.5px;top:533.4575px;width:13.2px;height:13.4px;background:#fff;border:1px solid #3c3c3c;border-radius:1px;box-shadow:inset 0 0 0 0.4px #777;"></div>
<svg width="13" height="13" viewBox="0 0 13 13" style="left:1365.5px;top:533.4575px"><path d="M2.6 6.6 L5.2 9.4 L10.6 3.4" stroke="#2a2a2a" stroke-width="1.25" fill="none"/></svg>
<div class="b" style="left:1421.5px;top:533.4575px;width:13.2px;height:13.4px;background:#fff;border:1px solid #3c3c3c;border-radius:1px;box-shadow:inset 0 0 0 0.4px #777;"></div>
<div class="b" style="left:1478.5px;top:533.4575px;width:13.2px;height:13.4px;background:#fff;border:1px solid #3c3c3c;border-radius:1px;box-shadow:inset 0 0 0 0.4px #777;"></div>
<div class="b" style="left:1534.5px;top:533.4575px;width:13.2px;height:13.4px;background:#fff;border:1px solid #3c3c3c;border-radius:1px;box-shadow:inset 0 0 0 0.4px #777;"></div>
<div class="b" style="left:1590.5px;top:533.4575px;width:13.2px;height:13.4px;background:#fff;border:1px solid #3c3c3c;border-radius:1px;box-shadow:inset 0 0 0 0.4px #777;"></div>
<span class="t" style="left:1641.55px;top:534.82px;font-size:12px;line-height:12px;color:#000;transform:scaleX(0.9000);">-22.2</span>
<span class="t" style="left:1699.70px;top:534.82px;font-size:12px;line-height:12px;color:#000;transform:scaleX(0.9000);">39.4</span>
<span class="t" style="left:1757.26px;top:534.82px;font-size:12px;line-height:12px;color:#000;transform:scaleX(0.9000);">-6.3</span>
<span class="t" style="left:1809.41px;top:534.82px;font-size:12px;line-height:12px;color:#000;transform:scaleX(0.9000);">240.4</span>
<div class="b" style="left:1061.0px;top:224px;width:1px;height:325.5px;background:#ececec;"></div>
<div class="b" style="left:1117.5px;top:224px;width:1px;height:325.5px;background:#ececec;"></div>
<div class="b" style="left:1174.0px;top:224px;width:1px;height:325.5px;background:#ececec;"></div>
<div class="b" style="left:1230.0px;top:224px;width:1px;height:325.5px;background:#ececec;"></div>
<div class="b" style="left:1286.5px;top:224px;width:1px;height:325.5px;background:#ececec;"></div>
<div class="b" style="left:1343.0px;top:224px;width:1px;height:325.5px;background:#ececec;"></div>
<div class="b" style="left:1399.5px;top:224px;width:1px;height:325.5px;background:#ececec;"></div>
<div class="b" style="left:1455.5px;top:224px;width:1px;height:325.5px;background:#ececec;"></div>
<div class="b" style="left:1512.0px;top:224px;width:1px;height:325.5px;background:#ececec;"></div>
<div class="b" style="left:1568.5px;top:224px;width:1px;height:325.5px;background:#ececec;"></div>
<div class="b" style="left:1624.5px;top:224px;width:1px;height:325.5px;background:#ececec;"></div>
<div class="b" style="left:1681.0px;top:224px;width:1px;height:325.5px;background:#ececec;"></div>
<div class="b" style="left:1737.5px;top:224px;width:1px;height:325.5px;background:#ececec;"></div>
<div class="b" style="left:1793.5px;top:224px;width:1px;height:325.5px;background:#ececec;"></div>
<div class="b" style="left:1850.0px;top:224px;width:1px;height:325.5px;background:#ececec;"></div>
<div class="b" style="left:932px;top:223.6px;width:22.799999999999955px;height:326px;background:#f0f0f0;border-right:1px solid #a6a6a6;"></div>
<div class="b" style="left:932px;top:549.3px;width:919px;height:18.200000000000045px;background:#f0f0f0;"></div>
<div class="b" style="left:932px;top:548.8px;width:919px;height:1px;background:#9c9c9c;"></div>
<div class="b" style="left:932px;top:567.0px;width:919px;height:1.7px;background:#b2b2b2;"></div>
<div class="b" style="left:1004.8px;top:549.3px;width:1px;height:18.200000000000045px;background:#8a8a8a;"></div>
<span class="t" style="left:938.00px;top:553.14px;font-size:10.7px;line-height:10.7px;color:#000;font-weight:bold;transform:scaleX(1.1236);">Δ'</span>
<span class="t" style="left:956.20px;top:553.14px;font-size:10.7px;line-height:10.7px;color:#000;font-weight:bold;transform:scaleX(1.0940);">Variaz.&nbsp;K</span>
<span class="t" style="left:1020.26px;top:552.24px;font-size:12px;line-height:12px;color:#f01c24;transform:scaleX(0.9000);">1.835</span>
<span class="t" style="left:1076.62px;top:552.24px;font-size:12px;line-height:12px;color:#000;transform:scaleX(0.9000);">0.194</span>
<span class="t" style="left:1132.97px;top:552.24px;font-size:12px;line-height:12px;color:#000;transform:scaleX(0.9000);">0.194</span>
<span class="t" style="left:1189.32px;top:552.24px;font-size:12px;line-height:12px;color:#000;transform:scaleX(0.9000);">0.194</span>
<span class="t" style="left:1245.68px;top:552.24px;font-size:12px;line-height:12px;color:#168a16;transform:scaleX(0.9000);">0.143</span>
<span class="t" style="left:1302.03px;top:552.24px;font-size:12px;line-height:12px;color:#168a16;transform:scaleX(0.9000);">0.143</span>
<span class="t" style="left:1358.38px;top:552.24px;font-size:12px;line-height:12px;color:#168a16;transform:scaleX(0.9000);">0.143</span>
<span class="t" style="left:1414.74px;top:552.24px;font-size:12px;line-height:12px;color:#000;transform:scaleX(0.9000);">1.625</span>
<span class="t" style="left:1471.09px;top:552.24px;font-size:12px;line-height:12px;color:#000;transform:scaleX(0.9000);">1.625</span>
<span class="t" style="left:1527.44px;top:552.24px;font-size:12px;line-height:12px;color:#000;transform:scaleX(0.9000);">1.343</span>
<span class="t" style="left:1583.79px;top:552.24px;font-size:12px;line-height:12px;color:#000;transform:scaleX(0.9000);">1.343</span>
<div class="b" style="left:1851px;top:128px;width:17.5px;height:440.5px;background:#f0f0f0;"></div>
<div class="b" style="left:1850.5px;top:128px;width:1px;height:96px;background:#a3a3a3;"></div>
<div class="b" style="left:1852px;top:146.3px;width:15px;height:154px;background:#cdcdcd;"></div>
<svg width="10" height="6" viewBox="0 0 10 6" style="left:1854.7px;top:134.5px"><path d="M1 5 L5 1 L9 5" stroke="#333" stroke-width="1.5" fill="none"/></svg>
<svg width="10" height="6" viewBox="0 0 10 6" style="left:1854.7px;top:557px"><path d="M1 1 L5 5 L9 1" stroke="#333" stroke-width="1.5" fill="none"/></svg>
<div class="b" style="left:0px;top:87px;width:956px;height:445px;background:#fff;"></div>
<div class="b" style="left:6px;top:90px;width:942px;height:434px;background:#fff;border:1px solid #a2a2a2;border-right-color:#858585;border-bottom-color:#858585;box-shadow:2px 2px 4px rgba(0,0,0,0.55);"></div>
<div class="b" style="left:7px;top:91px;width:940px;height:3px;background:linear-gradient(#d4d6da,#ffffff);"></div>
<div class="b" style="left:7.3px;top:91px;width:2.2px;height:1.6px;background:#555;"></div>
<div class="b" style="left:10.6px;top:91px;width:1px;height:1.6px;background:#555;"></div>
<svg width="960" height="576" viewBox="0 0 960 576">
<line x1="236.3" y1="317.3" x2="414.30" y2="317.30" stroke="#d4d4d4" stroke-width="1"/>
<line x1="236.3" y1="317.3" x2="413.14" y2="297.01" stroke="#d4d4d4" stroke-width="1"/>
<line x1="236.3" y1="317.3" x2="409.67" y2="276.98" stroke="#d4d4d4" stroke-width="1"/>
<line x1="236.3" y1="317.3" x2="403.95" y2="257.48" stroke="#d4d4d4" stroke-width="1"/>
<line x1="236.3" y1="317.3" x2="396.04" y2="238.76" stroke="#d4d4d4" stroke-width="1"/>
<line x1="236.3" y1="317.3" x2="386.04" y2="221.07" stroke="#d4d4d4" stroke-width="1"/>
<line x1="236.3" y1="317.3" x2="374.10" y2="204.62" stroke="#d4d4d4" stroke-width="1"/>
<line x1="236.3" y1="317.3" x2="360.35" y2="189.65" stroke="#d4d4d4" stroke-width="1"/>
<line x1="236.3" y1="317.3" x2="345.00" y2="176.34" stroke="#d4d4d4" stroke-width="1"/>
<line x1="236.3" y1="317.3" x2="328.22" y2="164.87" stroke="#d4d4d4" stroke-width="1"/>
<line x1="236.3" y1="317.3" x2="310.24" y2="155.39" stroke="#d4d4d4" stroke-width="1"/>
<line x1="236.3" y1="317.3" x2="291.31" y2="148.01" stroke="#d4d4d4" stroke-width="1"/>
<line x1="236.3" y1="317.3" x2="271.65" y2="142.85" stroke="#d4d4d4" stroke-width="1"/>
<line x1="236.3" y1="317.3" x2="251.53" y2="139.95" stroke="#d4d4d4" stroke-width="1"/>
<line x1="236.3" y1="317.3" x2="231.22" y2="139.37" stroke="#d4d4d4" stroke-width="1"/>
<line x1="236.3" y1="317.3" x2="210.97" y2="141.11" stroke="#d4d4d4" stroke-width="1"/>
<line x1="236.3" y1="317.3" x2="191.05" y2="145.15" stroke="#d4d4d4" stroke-width="1"/>
<line x1="236.3" y1="317.3" x2="171.72" y2="151.43" stroke="#d4d4d4" stroke-width="1"/>
<line x1="236.3" y1="317.3" x2="153.23" y2="159.87" stroke="#d4d4d4" stroke-width="1"/>
<line x1="236.3" y1="317.3" x2="135.83" y2="170.37" stroke="#d4d4d4" stroke-width="1"/>
<line x1="236.3" y1="317.3" x2="119.73" y2="182.78" stroke="#d4d4d4" stroke-width="1"/>
<line x1="236.3" y1="317.3" x2="105.16" y2="196.94" stroke="#d4d4d4" stroke-width="1"/>
<line x1="236.3" y1="317.3" x2="92.29" y2="212.67" stroke="#d4d4d4" stroke-width="1"/>
<line x1="236.3" y1="317.3" x2="81.31" y2="229.77" stroke="#d4d4d4" stroke-width="1"/>
<line x1="236.3" y1="317.3" x2="72.34" y2="248.01" stroke="#d4d4d4" stroke-width="1"/>
<line x1="236.3" y1="317.3" x2="65.51" y2="267.15" stroke="#d4d4d4" stroke-width="1"/>
<line x1="236.3" y1="317.3" x2="60.91" y2="286.95" stroke="#d4d4d4" stroke-width="1"/>
<line x1="236.3" y1="317.3" x2="58.59" y2="307.14" stroke="#d4d4d4" stroke-width="1"/>
<line x1="236.3" y1="317.3" x2="58.59" y2="327.46" stroke="#d4d4d4" stroke-width="1"/>
<line x1="236.3" y1="317.3" x2="60.91" y2="347.65" stroke="#d4d4d4" stroke-width="1"/>
<line x1="236.3" y1="317.3" x2="65.51" y2="367.45" stroke="#d4d4d4" stroke-width="1"/>
<line x1="236.3" y1="317.3" x2="72.34" y2="386.59" stroke="#d4d4d4" stroke-width="1"/>
<line x1="236.3" y1="317.3" x2="81.31" y2="404.83" stroke="#d4d4d4" stroke-width="1"/>
<line x1="236.3" y1="317.3" x2="92.29" y2="421.93" stroke="#d4d4d4" stroke-width="1"/>
<line x1="236.3" y1="317.3" x2="105.16" y2="437.66" stroke="#d4d4d4" stroke-width="1"/>
<line x1="236.3" y1="317.3" x2="119.73" y2="451.82" stroke="#d4d4d4" stroke-width="1"/>
<line x1="236.3" y1="317.3" x2="135.83" y2="464.23" stroke="#d4d4d4" stroke-width="1"/>
<line x1="236.3" y1="317.3" x2="153.23" y2="474.73" stroke="#d4d4d4" stroke-width="1"/>
<line x1="236.3" y1="317.3" x2="171.72" y2="483.17" stroke="#d4d4d4" stroke-width="1"/>
<line x1="236.3" y1="317.3" x2="191.05" y2="489.45" stroke="#d4d4d4" stroke-width="1"/>
<line x1="236.3" y1="317.3" x2="210.97" y2="493.49" stroke="#d4d4d4" stroke-width="1"/>
<line x1="236.3" y1="317.3" x2="231.22" y2="495.23" stroke="#d4d4d4" stroke-width="1"/>
<line x1="236.3" y1="317.3" x2="251.53" y2="494.65" stroke="#d4d4d4" stroke-width="1"/>
<line x1="236.3" y1="317.3" x2="271.65" y2="491.75" stroke="#d4d4d4" stroke-width="1"/>
<line x1="236.3" y1="317.3" x2="291.31" y2="486.59" stroke="#d4d4d4" stroke-width="1"/>
<line x1="236.3" y1="317.3" x2="310.24" y2="479.21" stroke="#d4d4d4" stroke-width="1"/>
<line x1="236.3" y1="317.3" x2="328.22" y2="469.73" stroke="#d4d4d4" stroke-width="1"/>
<line x1="236.3" y1="317.3" x2="345.00" y2="458.26" stroke="#d4d4d4" stroke-width="1"/>
<line x1="236.3" y1="317.3" x2="360.35" y2="444.95" stroke="#d4d4d4" stroke-width="1"/>
<line x1="236.3" y1="317.3" x2="374.10" y2="429.98" stroke="#d4d4d4" stroke-width="1"/>
<line x1="236.3" y1="317.3" x2="386.04" y2="413.53" stroke="#d4d4d4" stroke-width="1"/>
<line x1="236.3" y1="317.3" x2="396.04" y2="395.84" stroke="#d4d4d4" stroke-width="1"/>
<line x1="236.3" y1="317.3" x2="403.95" y2="377.12" stroke="#d4d4d4" stroke-width="1"/>
<line x1="236.3" y1="317.3" x2="409.67" y2="357.62" stroke="#d4d4d4" stroke-width="1"/>
<line x1="236.3" y1="317.3" x2="413.14" y2="337.59" stroke="#d4d4d4" stroke-width="1"/>
<polygon points="236.30,317.30 283.50,317.30 283.19,311.92" fill="#f59398" stroke="#c81423" stroke-width="1" stroke-linejoin="round"/>
<polygon points="236.30,317.30 283.19,311.92 282.27,306.61" fill="#f59398" stroke="#c81423" stroke-width="1" stroke-linejoin="round"/>
<polygon points="236.30,317.30 284.12,306.18 282.54,300.80" fill="#f59398" stroke="#c81423" stroke-width="1" stroke-linejoin="round"/>
<polygon points="236.30,317.30 282.54,300.80 280.36,295.64" fill="#f59398" stroke="#c81423" stroke-width="1" stroke-linejoin="round"/>
<polygon points="236.30,317.30 280.63,295.50 277.86,290.59" fill="#f59398" stroke="#c81423" stroke-width="1" stroke-linejoin="round"/>
<polygon points="236.30,317.30 278.19,290.38 274.85,285.78" fill="#f59398" stroke="#c81423" stroke-width="1" stroke-linejoin="round"/>
<polygon points="236.30,317.30 274.85,285.78 271.01,281.59" fill="#f59398" stroke="#c81423" stroke-width="1" stroke-linejoin="round"/>
<polygon points="236.30,317.30 271.22,281.37 266.89,277.63" fill="#f59398" stroke="#c81423" stroke-width="1" stroke-linejoin="round"/>
<polygon points="236.30,317.30 266.89,277.63 262.17,274.40" fill="#f59398" stroke="#c81423" stroke-width="1" stroke-linejoin="round"/>
<polygon points="236.30,317.30 262.79,273.37 257.61,270.64" fill="#f59398" stroke="#c81423" stroke-width="1" stroke-linejoin="round"/>
<polygon points="236.30,317.30 257.61,270.64 252.15,268.51" fill="#f59398" stroke="#c81423" stroke-width="1" stroke-linejoin="round"/>
<polygon points="236.30,317.30 252.59,267.18 246.77,265.65" fill="#f59398" stroke="#c81423" stroke-width="1" stroke-linejoin="round"/>
<polygon points="236.30,317.30 246.77,265.65 240.81,264.79" fill="#f59398" stroke="#c81423" stroke-width="1" stroke-linejoin="round"/>
<polygon points="236.30,317.30 240.85,264.30 234.78,264.12" fill="#f59398" stroke="#c81423" stroke-width="1" stroke-linejoin="round"/>
<polygon points="236.30,317.30 234.78,264.12 228.73,264.64" fill="#f59398" stroke="#c81423" stroke-width="1" stroke-linejoin="round"/>
<polygon points="236.30,317.30 228.60,263.75 222.55,264.98" fill="#f59398" stroke="#c81423" stroke-width="1" stroke-linejoin="round"/>
<polygon points="236.30,317.30 222.55,264.98 216.67,266.89" fill="#f59398" stroke="#c81423" stroke-width="1" stroke-linejoin="round"/>
<polygon points="236.30,317.30 216.16,265.58 210.40,268.21" fill="#f59398" stroke="#c81423" stroke-width="1" stroke-linejoin="round"/>
<polygon points="236.30,317.30 210.26,267.95 204.80,271.24" fill="#f59398" stroke="#c81423" stroke-width="1" stroke-linejoin="round"/>
<polygon points="236.30,317.30 204.13,270.25 198.97,274.22" fill="#f59398" stroke="#c81423" stroke-width="1" stroke-linejoin="round"/>
<polygon points="236.30,317.30 198.65,273.84 193.94,278.42" fill="#f59398" stroke="#c81423" stroke-width="1" stroke-linejoin="round"/>
<polygon points="236.30,317.30 193.20,277.74 188.97,282.91" fill="#f59398" stroke="#c81423" stroke-width="1" stroke-linejoin="round"/>
<polygon points="236.30,317.30 188.57,282.62 184.93,288.29" fill="#f59398" stroke="#c81423" stroke-width="1" stroke-linejoin="round"/>
<polygon points="236.30,317.30 184.06,287.80 181.03,293.94" fill="#f59398" stroke="#c81423" stroke-width="1" stroke-linejoin="round"/>
<polygon points="236.30,317.30 180.57,293.75 178.25,300.26" fill="#f59398" stroke="#c81423" stroke-width="1" stroke-linejoin="round"/>
<polygon points="236.30,317.30 177.48,300.03 175.90,306.85" fill="#f59398" stroke="#c81423" stroke-width="1" stroke-linejoin="round"/>
<polygon points="236.30,317.30 175.60,306.80 174.80,313.78" fill="#f59398" stroke="#c81423" stroke-width="1" stroke-linejoin="round"/>
<polygon points="236.30,317.30 174.20,313.75 174.20,320.85" fill="#f59398" stroke="#c81423" stroke-width="1" stroke-linejoin="round"/>
<polygon points="236.30,317.30 173.90,320.87 174.72,327.96" fill="#f59398" stroke="#c81423" stroke-width="1" stroke-linejoin="round"/>
<polygon points="236.30,317.30 174.03,328.08 175.66,335.11" fill="#f59398" stroke="#c81423" stroke-width="1" stroke-linejoin="round"/>
<polygon points="236.30,317.30 175.37,335.19 177.81,342.02" fill="#f59398" stroke="#c81423" stroke-width="1" stroke-linejoin="round"/>
<polygon points="236.30,317.30 176.89,342.41 180.14,349.02" fill="#f59398" stroke="#c81423" stroke-width="1" stroke-linejoin="round"/>
<polygon points="236.30,317.30 179.70,349.26 183.71,355.51" fill="#f59398" stroke="#c81423" stroke-width="1" stroke-linejoin="round"/>
<polygon points="236.30,317.30 182.10,356.68 186.94,362.60" fill="#f59398" stroke="#c81423" stroke-width="1" stroke-linejoin="round"/>
<polygon points="236.30,317.30 186.20,363.28 191.77,368.69" fill="#f59398" stroke="#c81423" stroke-width="1" stroke-linejoin="round"/>
<polygon points="236.30,317.30 347.78,408.45 357.44,395.15" fill="#f59398" stroke="#c81423" stroke-width="1" stroke-linejoin="round"/>
<polygon points="236.30,317.30 358.53,395.86 366.69,381.41" fill="#f59398" stroke="#c81423" stroke-width="1" stroke-linejoin="round"/>
<polygon points="236.30,317.30 367.86,381.98 374.37,366.56" fill="#f59398" stroke="#c81423" stroke-width="1" stroke-linejoin="round"/>
<polygon points="236.30,317.30 376.16,367.20 380.94,350.93" fill="#f59398" stroke="#c81423" stroke-width="1" stroke-linejoin="round"/>
<polygon points="236.30,317.30 384.54,351.77 387.51,334.65" fill="#f59398" stroke="#c81423" stroke-width="1" stroke-linejoin="round"/>
<polygon points="236.30,317.30 395.85,335.61 396.90,317.30" fill="#f59398" stroke="#c81423" stroke-width="1" stroke-linejoin="round"/>
<defs><radialGradient id="bl1"><stop offset="0" stop-color="#f59398"/><stop offset="0.5" stop-color="#f59398"/><stop offset="1" stop-color="#f59398" stop-opacity="0"/></radialGradient></defs>
<circle cx="236.8" cy="316.3" r="19" fill="url(#bl1)"/>
<polygon points="236.30,317.30 186.53,374.74 193.40,380.04" fill="#008800" stroke="#006400" stroke-width="1" stroke-linejoin="round"/>
<polygon points="236.30,317.30 193.12,380.45 200.60,384.96" fill="#008800" stroke="#006400" stroke-width="1" stroke-linejoin="round"/>
<polygon points="236.30,317.30 174.23,434.93 188.05,441.24" fill="#008800" stroke="#006400" stroke-width="1" stroke-linejoin="round"/>
<polygon points="236.30,317.30 187.43,442.82 202.06,447.57" fill="#008800" stroke="#006400" stroke-width="1" stroke-linejoin="round"/>
<polygon points="236.30,317.30 201.93,448.06 217.06,451.12" fill="#008800" stroke="#006400" stroke-width="1" stroke-linejoin="round"/>
<polygon points="236.30,317.30 217.06,451.12 232.44,452.44" fill="#008800" stroke="#006400" stroke-width="1" stroke-linejoin="round"/>
<polygon points="236.30,317.30 232.41,453.54 247.96,453.10" fill="#008800" stroke="#006400" stroke-width="1" stroke-linejoin="round"/>
<polygon points="236.30,317.30 248.07,454.30 263.61,452.06" fill="#008800" stroke="#006400" stroke-width="1" stroke-linejoin="round"/>
<polygon points="236.30,317.30 263.75,452.75 279.01,448.74" fill="#008800" stroke="#006400" stroke-width="1" stroke-linejoin="round"/>
<polygon points="236.30,317.30 279.19,449.31 293.96,443.56" fill="#008800" stroke="#006400" stroke-width="1" stroke-linejoin="round"/>
<polygon points="236.30,317.30 294.25,444.19 308.34,436.76" fill="#008800" stroke="#006400" stroke-width="1" stroke-linejoin="round"/>
<polygon points="236.30,317.30 308.70,437.36 321.91,428.32" fill="#008800" stroke="#006400" stroke-width="1" stroke-linejoin="round"/>
<polygon points="236.30,317.30 322.28,428.80 334.43,418.27" fill="#008800" stroke="#006400" stroke-width="1" stroke-linejoin="round"/>
<polygon points="236.30,317.30 334.92,418.77 345.84,406.87" fill="#008800" stroke="#006400" stroke-width="1" stroke-linejoin="round"/>
<circle cx="236.3" cy="317.3" r="35.6" fill="none" stroke="#dcdcdc" stroke-width="2"/>
<circle cx="236.3" cy="317.3" r="71.2" fill="none" stroke="#00a600" stroke-width="2"/>
<circle cx="236.3" cy="317.3" r="106.8" fill="none" stroke="#00fa00" stroke-width="2"/>
<circle cx="236.3" cy="317.3" r="142.4" fill="none" stroke="#00a600" stroke-width="2"/>
<circle cx="236.3" cy="317.3" r="178.0" fill="none" stroke="#d2d2d2" stroke-width="2"/>
<text x="423.8" y="310.8" fill="#e8141c" text-anchor="middle" textLength="6.0" lengthAdjust="spacingAndGlyphs">3</text>
<text x="421.3" y="289.5" fill="#e8141c" text-anchor="middle" textLength="6.0" lengthAdjust="spacingAndGlyphs">4</text>
<text x="416.5" y="268.5" fill="#e8141c" text-anchor="middle" textLength="6.0" lengthAdjust="spacingAndGlyphs">2</text>
<text x="409.2" y="248.2" fill="#e8141c" text-anchor="middle" textLength="6.0" lengthAdjust="spacingAndGlyphs">6</text>
<text x="399.7" y="228.9" fill="#e8141c" text-anchor="middle" textLength="6.0" lengthAdjust="spacingAndGlyphs">1</text>
<text x="388.1" y="210.8" fill="#e8141c" text-anchor="middle" textLength="12.0" lengthAdjust="spacingAndGlyphs">31</text>
<text x="374.5" y="194.1" fill="#e8141c" text-anchor="middle" textLength="12.0" lengthAdjust="spacingAndGlyphs">33</text>
<text x="359.0" y="179.1" fill="#e8141c" text-anchor="middle" textLength="12.0" lengthAdjust="spacingAndGlyphs">12</text>
<text x="342.0" y="166.0" fill="#e8141c" text-anchor="middle" textLength="12.0" lengthAdjust="spacingAndGlyphs">13</text>
<text x="323.6" y="154.9" fill="#e8141c" text-anchor="middle" textLength="6.0" lengthAdjust="spacingAndGlyphs">8</text>
<text x="304.0" y="145.9" fill="#e8141c" text-anchor="middle" textLength="12.0" lengthAdjust="spacingAndGlyphs">10</text>
<text x="283.5" y="139.3" fill="#e8141c" text-anchor="middle" textLength="12.0" lengthAdjust="spacingAndGlyphs">29</text>
<text x="262.4" y="135.0" fill="#e8141c" text-anchor="middle" textLength="12.0" lengthAdjust="spacingAndGlyphs">30</text>
<text x="241.0" y="133.2" fill="#e8141c" text-anchor="middle" textLength="11.2" lengthAdjust="spacingAndGlyphs">11</text>
<text x="219.5" y="133.8" fill="#e8141c" text-anchor="middle" textLength="12.0" lengthAdjust="spacingAndGlyphs">15</text>
<text x="198.2" y="136.9" fill="#e8141c" text-anchor="middle" textLength="12.0" lengthAdjust="spacingAndGlyphs">21</text>
<text x="177.4" y="142.3" fill="#e8141c" text-anchor="middle" textLength="12.0" lengthAdjust="spacingAndGlyphs">23</text>
<text x="157.3" y="150.1" fill="#e8141c" text-anchor="middle" textLength="12.0" lengthAdjust="spacingAndGlyphs">39</text>
<text x="138.3" y="160.2" fill="#e8141c" text-anchor="middle" textLength="12.0" lengthAdjust="spacingAndGlyphs">41</text>
<text x="120.5" y="172.3" fill="#e8141c" text-anchor="middle" textLength="12.0" lengthAdjust="spacingAndGlyphs">35</text>
<text x="104.2" y="186.4" fill="#e8141c" text-anchor="middle" textLength="12.0" lengthAdjust="spacingAndGlyphs">37</text>
<text x="89.7" y="202.3" fill="#e8141c" text-anchor="middle" textLength="12.0" lengthAdjust="spacingAndGlyphs">17</text>
<text x="77.0" y="219.7" fill="#e8141c" text-anchor="middle" textLength="12.0" lengthAdjust="spacingAndGlyphs">18</text>
<text x="66.4" y="238.4" fill="#e8141c" text-anchor="middle" textLength="12.0" lengthAdjust="spacingAndGlyphs">20</text>
<text x="58.1" y="258.3" fill="#e8141c" text-anchor="middle" textLength="12.0" lengthAdjust="spacingAndGlyphs">24</text>
<text x="52.0" y="278.9" fill="#e8141c" text-anchor="middle" textLength="12.0" lengthAdjust="spacingAndGlyphs">38</text>
<text x="48.3" y="300.1" fill="#e8141c" text-anchor="middle" textLength="12.0" lengthAdjust="spacingAndGlyphs">42</text>
<text x="47.1" y="321.6" fill="#e8141c" text-anchor="middle" textLength="12.0" lengthAdjust="spacingAndGlyphs">47</text>
<text x="48.3" y="343.1" fill="#e8141c" text-anchor="middle" textLength="12.0" lengthAdjust="spacingAndGlyphs">48</text>
<text x="52.0" y="364.3" fill="#e8141c" text-anchor="middle" textLength="12.0" lengthAdjust="spacingAndGlyphs">26</text>
<text x="58.1" y="384.9" fill="#e8141c" text-anchor="middle" textLength="12.0" lengthAdjust="spacingAndGlyphs">27</text>
<text x="66.4" y="404.8" fill="#e8141c" text-anchor="middle" textLength="12.0" lengthAdjust="spacingAndGlyphs">44</text>
<text x="77.0" y="423.5" fill="#e8141c" text-anchor="middle" textLength="12.0" lengthAdjust="spacingAndGlyphs">45</text>
<text x="89.7" y="440.9" fill="#e8141c" text-anchor="middle" textLength="12.0" lengthAdjust="spacingAndGlyphs">54</text>
<text x="104.2" y="456.8" fill="#e8141c" text-anchor="middle" textLength="12.0" lengthAdjust="spacingAndGlyphs">55</text>
<text x="120.5" y="470.9" fill="#128a12" text-anchor="middle" textLength="12.0" lengthAdjust="spacingAndGlyphs">51</text>
<text x="138.3" y="483.0" fill="#128a12" text-anchor="middle" textLength="12.0" lengthAdjust="spacingAndGlyphs">53</text>
<text x="157.3" y="493.1" fill="#128a12" text-anchor="middle" textLength="6.0" lengthAdjust="spacingAndGlyphs">5</text>
<text x="177.4" y="500.9" fill="#128a12" text-anchor="middle" textLength="6.0" lengthAdjust="spacingAndGlyphs">7</text>
<text x="198.2" y="506.3" fill="#128a12" text-anchor="middle" textLength="12.0" lengthAdjust="spacingAndGlyphs">14</text>
<text x="219.5" y="509.4" fill="#128a12" text-anchor="middle" textLength="12.0" lengthAdjust="spacingAndGlyphs">32</text>
<text x="241.0" y="510.0" fill="#128a12" text-anchor="middle" textLength="6.0" lengthAdjust="spacingAndGlyphs">9</text>
<text x="262.4" y="508.2" fill="#128a12" text-anchor="middle" textLength="12.0" lengthAdjust="spacingAndGlyphs">16</text>
<text x="283.5" y="503.9" fill="#128a12" text-anchor="middle" textLength="12.0" lengthAdjust="spacingAndGlyphs">34</text>
<text x="304.0" y="497.3" fill="#128a12" text-anchor="middle" textLength="12.0" lengthAdjust="spacingAndGlyphs">22</text>
<text x="323.6" y="488.3" fill="#128a12" text-anchor="middle" textLength="12.0" lengthAdjust="spacingAndGlyphs">40</text>
<text x="342.0" y="477.2" fill="#128a12" text-anchor="middle" textLength="12.0" lengthAdjust="spacingAndGlyphs">36</text>
<text x="359.0" y="464.1" fill="#128a12" text-anchor="middle" textLength="12.0" lengthAdjust="spacingAndGlyphs">19</text>
<text x="374.5" y="449.1" fill="#128a12" text-anchor="middle" textLength="12.0" lengthAdjust="spacingAndGlyphs">25</text>
<text x="388.1" y="432.4" fill="#e8141c" text-anchor="middle" textLength="12.0" lengthAdjust="spacingAndGlyphs">43</text>
<text x="399.7" y="414.3" fill="#e8141c" text-anchor="middle" textLength="12.0" lengthAdjust="spacingAndGlyphs">49</text>
<text x="409.2" y="395.0" fill="#e8141c" text-anchor="middle" textLength="12.0" lengthAdjust="spacingAndGlyphs">28</text>
<text x="416.5" y="374.7" fill="#e8141c" text-anchor="middle" textLength="12.0" lengthAdjust="spacingAndGlyphs">46</text>
<text x="421.3" y="353.7" fill="#e8141c" text-anchor="middle" textLength="12.0" lengthAdjust="spacingAndGlyphs">50</text>
<text x="423.8" y="332.4" fill="#e8141c" text-anchor="middle" textLength="12.0" lengthAdjust="spacingAndGlyphs">52</text>
<text x="236.3" y="112.6" fill="#000" text-anchor="middle" style="font-size:13px" textLength="235.7" lengthAdjust="spacingAndGlyphs">Variaz. Rigidezza (limiti rif.: -15% / +15%)</text>
<line x1="697.3" y1="317.3" x2="875.30" y2="317.30" stroke="#d4d4d4" stroke-width="1"/>
<line x1="697.3" y1="317.3" x2="874.14" y2="297.01" stroke="#d4d4d4" stroke-width="1"/>
<line x1="697.3" y1="317.3" x2="870.67" y2="276.98" stroke="#d4d4d4" stroke-width="1"/>
<line x1="697.3" y1="317.3" x2="864.95" y2="257.48" stroke="#d4d4d4" stroke-width="1"/>
<line x1="697.3" y1="317.3" x2="857.04" y2="238.76" stroke="#d4d4d4" stroke-width="1"/>
<line x1="697.3" y1="317.3" x2="847.04" y2="221.07" stroke="#d4d4d4" stroke-width="1"/>
<line x1="697.3" y1="317.3" x2="835.10" y2="204.62" stroke="#d4d4d4" stroke-width="1"/>
<line x1="697.3" y1="317.3" x2="821.35" y2="189.65" stroke="#d4d4d4" stroke-width="1"/>
<line x1="697.3" y1="317.3" x2="806.00" y2="176.34" stroke="#d4d4d4" stroke-width="1"/>
<line x1="697.3" y1="317.3" x2="789.22" y2="164.87" stroke="#d4d4d4" stroke-width="1"/>
<line x1="697.3" y1="317.3" x2="771.24" y2="155.39" stroke="#d4d4d4" stroke-width="1"/>
<line x1="697.3" y1="317.3" x2="752.31" y2="148.01" stroke="#d4d4d4" stroke-width="1"/>
<line x1="697.3" y1="317.3" x2="732.65" y2="142.85" stroke="#d4d4d4" stroke-width="1"/>
<line x1="697.3" y1="317.3" x2="712.53" y2="139.95" stroke="#d4d4d4" stroke-width="1"/>
<line x1="697.3" y1="317.3" x2="692.22" y2="139.37" stroke="#d4d4d4" stroke-width="1"/>
<line x1="697.3" y1="317.3" x2="671.97" y2="141.11" stroke="#d4d4d4" stroke-width="1"/>
<line x1="697.3" y1="317.3" x2="652.05" y2="145.15" stroke="#d4d4d4" stroke-width="1"/>
<line x1="697.3" y1="317.3" x2="632.72" y2="151.43" stroke="#d4d4d4" stroke-width="1"/>
<line x1="697.3" y1="317.3" x2="614.23" y2="159.87" stroke="#d4d4d4" stroke-width="1"/>
<line x1="697.3" y1="317.3" x2="596.83" y2="170.37" stroke="#d4d4d4" stroke-width="1"/>
<line x1="697.3" y1="317.3" x2="580.73" y2="182.78" stroke="#d4d4d4" stroke-width="1"/>
<line x1="697.3" y1="317.3" x2="566.16" y2="196.94" stroke="#d4d4d4" stroke-width="1"/>
<line x1="697.3" y1="317.3" x2="553.29" y2="212.67" stroke="#d4d4d4" stroke-width="1"/>
<line x1="697.3" y1="317.3" x2="542.31" y2="229.77" stroke="#d4d4d4" stroke-width="1"/>
<line x1="697.3" y1="317.3" x2="533.34" y2="248.01" stroke="#d4d4d4" stroke-width="1"/>
<line x1="697.3" y1="317.3" x2="526.51" y2="267.15" stroke="#d4d4d4" stroke-width="1"/>
<line x1="697.3" y1="317.3" x2="521.91" y2="286.95" stroke="#d4d4d4" stroke-width="1"/>
<line x1="697.3" y1="317.3" x2="519.59" y2="307.14" stroke="#d4d4d4" stroke-width="1"/>
<line x1="697.3" y1="317.3" x2="519.59" y2="327.46" stroke="#d4d4d4" stroke-width="1"/>
<line x1="697.3" y1="317.3" x2="521.91" y2="347.65" stroke="#d4d4d4" stroke-width="1"/>
<line x1="697.3" y1="317.3" x2="526.51" y2="367.45" stroke="#d4d4d4" stroke-width="1"/>
<line x1="697.3" y1="317.3" x2="533.34" y2="386.59" stroke="#d4d4d4" stroke-width="1"/>
<line x1="697.3" y1="317.3" x2="542.31" y2="404.83" stroke="#d4d4d4" stroke-width="1"/>
<line x1="697.3" y1="317.3" x2="553.29" y2="421.93" stroke="#d4d4d4" stroke-width="1"/>
<line x1="697.3" y1="317.3" x2="566.16" y2="437.66" stroke="#d4d4d4" stroke-width="1"/>
<line x1="697.3" y1="317.3" x2="580.73" y2="451.82" stroke="#d4d4d4" stroke-width="1"/>
<line x1="697.3" y1="317.3" x2="596.83" y2="464.23" stroke="#d4d4d4" stroke-width="1"/>
<line x1="697.3" y1="317.3" x2="614.23" y2="474.73" stroke="#d4d4d4" stroke-width="1"/>
<line x1="697.3" y1="317.3" x2="632.72" y2="483.17" stroke="#d4d4d4" stroke-width="1"/>
<line x1="697.3" y1="317.3" x2="652.05" y2="489.45" stroke="#d4d4d4" stroke-width="1"/>
<line x1="697.3" y1="317.3" x2="671.97" y2="493.49" stroke="#d4d4d4" stroke-width="1"/>
<line x1="697.3" y1="317.3" x2="692.22" y2="495.23" stroke="#d4d4d4" stroke-width="1"/>
<line x1="697.3" y1="317.3" x2="712.53" y2="494.65" stroke="#d4d4d4" stroke-width="1"/>
<line x1="697.3" y1="317.3" x2="732.65" y2="491.75" stroke="#d4d4d4" stroke-width="1"/>
<line x1="697.3" y1="317.3" x2="752.31" y2="486.59" stroke="#d4d4d4" stroke-width="1"/>
<line x1="697.3" y1="317.3" x2="771.24" y2="479.21" stroke="#d4d4d4" stroke-width="1"/>
<line x1="697.3" y1="317.3" x2="789.22" y2="469.73" stroke="#d4d4d4" stroke-width="1"/>
<line x1="697.3" y1="317.3" x2="806.00" y2="458.26" stroke="#d4d4d4" stroke-width="1"/>
<line x1="697.3" y1="317.3" x2="821.35" y2="444.95" stroke="#d4d4d4" stroke-width="1"/>
<line x1="697.3" y1="317.3" x2="835.10" y2="429.98" stroke="#d4d4d4" stroke-width="1"/>
<line x1="697.3" y1="317.3" x2="847.04" y2="413.53" stroke="#d4d4d4" stroke-width="1"/>
<line x1="697.3" y1="317.3" x2="857.04" y2="395.84" stroke="#d4d4d4" stroke-width="1"/>
<line x1="697.3" y1="317.3" x2="864.95" y2="377.12" stroke="#d4d4d4" stroke-width="1"/>
<line x1="697.3" y1="317.3" x2="870.67" y2="357.62" stroke="#d4d4d4" stroke-width="1"/>
<line x1="697.3" y1="317.3" x2="874.14" y2="337.59" stroke="#d4d4d4" stroke-width="1"/>
<polygon points="697.30,317.30 787.90,317.30 787.31,306.97" fill="#74ff74" stroke="#00c800" stroke-width="1" stroke-linejoin="round"/>
<polygon points="697.30,317.30 772.41,308.68 770.94,300.18" fill="#74ff74" stroke="#00c800" stroke-width="1" stroke-linejoin="round"/>
<polygon points="697.30,317.30 790.42,295.65 787.34,285.17" fill="#74ff74" stroke="#00c800" stroke-width="1" stroke-linejoin="round"/>
<polygon points="697.30,317.30 771.14,290.95 767.66,282.71" fill="#74ff74" stroke="#00c800" stroke-width="1" stroke-linejoin="round"/>
<polygon points="697.30,317.30 751.05,290.87 747.69,284.92" fill="#74ff74" stroke="none"/>
<polygon points="703.30,315.30 752.50,289.29 750.41,285.51" fill="#f59398" stroke="#c81423" stroke-width="1" stroke-linejoin="miter"/>
<polygon points="697.30,317.30 776.21,266.59 769.91,257.92" fill="#74ff74" stroke="#00c800" stroke-width="1" stroke-linejoin="round"/>
<polygon points="697.30,317.30 758.30,267.42 752.22,260.79" fill="#74ff74" stroke="#00c800" stroke-width="1" stroke-linejoin="round"/>
<polygon points="697.30,317.30 755.01,257.92 747.86,251.73" fill="#74ff74" stroke="#00c800" stroke-width="1" stroke-linejoin="round"/>
<polygon points="697.30,317.30 756.47,240.56 747.34,234.32" fill="#74ff74" stroke="#00c800" stroke-width="1" stroke-linejoin="round"/>
<polygon points="697.30,317.30 750.28,229.44 739.92,223.97" fill="#74ff74" stroke="#00c800" stroke-width="1" stroke-linejoin="round"/>
<polygon points="697.30,317.30 731.41,242.62 722.67,239.22" fill="#74ff74" stroke="#00c800" stroke-width="1" stroke-linejoin="round"/>
<polygon points="697.30,317.30 728.02,222.76 717.04,219.88" fill="#74ff74" stroke="#00c800" stroke-width="1" stroke-linejoin="round"/>
<polygon points="697.30,317.30 713.62,236.74 704.33,235.40" fill="#74ff74" stroke="#00c800" stroke-width="1" stroke-linejoin="round"/>
<polygon points="697.30,317.30 704.73,230.82 694.82,230.54" fill="#74ff74" stroke="#00c800" stroke-width="1" stroke-linejoin="round"/>
<polygon points="697.30,317.30 694.36,214.34 682.64,215.35" fill="#74ff74" stroke="#00c800" stroke-width="1" stroke-linejoin="round"/>
<polygon points="697.30,317.30 682.50,214.36 670.86,216.72" fill="#74ff74" stroke="#00c800" stroke-width="1" stroke-linejoin="round"/>
<polygon points="697.30,317.30 674.45,230.35 664.68,233.53" fill="#74ff74" stroke="#00c800" stroke-width="1" stroke-linejoin="round"/>
<polygon points="697.30,317.30 660.00,221.50 649.33,226.38" fill="#74ff74" stroke="#00c800" stroke-width="1" stroke-linejoin="round"/>
<polygon points="697.30,317.30 656.47,239.91 647.91,245.07" fill="#74ff74" stroke="#00c800" stroke-width="1" stroke-linejoin="round"/>
<polygon points="697.30,317.30 636.34,228.15 626.58,235.68" fill="#74ff74" stroke="#00c800" stroke-width="1" stroke-linejoin="round"/>
<polygon points="697.30,317.30 640.33,251.55 633.20,258.47" fill="#74ff74" stroke="#00c800" stroke-width="1" stroke-linejoin="round"/>
<polygon points="697.30,317.30 628.56,254.21 621.82,262.46" fill="#74ff74" stroke="#00c800" stroke-width="1" stroke-linejoin="round"/>
<polygon points="697.30,317.30 606.37,251.23 599.43,262.03" fill="#74ff74" stroke="#00c800" stroke-width="1" stroke-linejoin="round"/>
<polygon points="697.30,317.30 614.40,270.49 609.61,280.24" fill="#74ff74" stroke="#00c800" stroke-width="1" stroke-linejoin="round"/>
<polygon points="697.30,317.30 594.13,273.70 589.84,285.75" fill="#74ff74" stroke="#00c800" stroke-width="1" stroke-linejoin="round"/>
<polygon points="697.30,317.30 609.03,291.38 606.65,301.61" fill="#74ff74" stroke="#00c800" stroke-width="1" stroke-linejoin="round"/>
<polygon points="697.30,317.30 587.93,298.37 586.48,310.96" fill="#74ff74" stroke="#00c800" stroke-width="1" stroke-linejoin="round"/>
<polygon points="697.30,317.30 585.48,310.91 585.48,323.69" fill="#74ff74" stroke="#00c800" stroke-width="1" stroke-linejoin="round"/>
<polygon points="697.30,317.30 600.46,322.84 601.72,333.84" fill="#74ff74" stroke="#00c800" stroke-width="1" stroke-linejoin="round"/>
<polygon points="697.30,317.30 596.50,334.74 599.14,346.12" fill="#74ff74" stroke="#00c800" stroke-width="1" stroke-linejoin="round"/>
<polygon points="697.30,317.30 580.24,351.67 584.92,364.79" fill="#74ff74" stroke="#00c800" stroke-width="1" stroke-linejoin="round"/>
<polygon points="697.30,317.30 607.03,355.45 611.97,365.49" fill="#74ff74" stroke="#00c800" stroke-width="1" stroke-linejoin="round"/>
<polygon points="697.30,317.30 593.68,375.82 601.03,387.25" fill="#74ff74" stroke="#00c800" stroke-width="1" stroke-linejoin="round"/>
<polygon points="697.30,317.30 600.38,387.72 609.04,398.31" fill="#74ff74" stroke="#00c800" stroke-width="1" stroke-linejoin="round"/>
<polygon points="697.30,317.30 621.12,387.22 629.59,395.44" fill="#74ff74" stroke="#00c800" stroke-width="1" stroke-linejoin="round"/>
<polygon points="697.30,317.30 775.10,380.92 781.85,371.63" fill="#74ff74" stroke="#00c800" stroke-width="1" stroke-linejoin="round"/>
<polygon points="697.30,317.30 783.11,372.45 788.83,362.30" fill="#74ff74" stroke="#00c800" stroke-width="1" stroke-linejoin="round"/>
<polygon points="697.30,317.30 797.81,366.72 802.79,354.94" fill="#74ff74" stroke="#00c800" stroke-width="1" stroke-linejoin="round"/>
<polygon points="697.30,317.30 798.08,353.26 801.52,341.54" fill="#74ff74" stroke="#00c800" stroke-width="1" stroke-linejoin="round"/>
<polygon points="697.30,317.30 806.00,342.58 808.17,330.02" fill="#74ff74" stroke="#00c800" stroke-width="1" stroke-linejoin="round"/>
<polygon points="697.30,317.30 817.71,331.12 818.50,317.30" fill="#74ff74" stroke="#00c800" stroke-width="1" stroke-linejoin="round"/>
<defs><radialGradient id="bl2"><stop offset="0" stop-color="#74ff74"/><stop offset="0.5" stop-color="#74ff74"/><stop offset="1" stop-color="#74ff74" stop-opacity="0"/></radialGradient></defs>
<circle cx="697.8" cy="316.3" r="19" fill="url(#bl2)"/>
<polygon points="697.30,317.30 610.53,417.44 622.51,426.68" fill="#008800" stroke="#006400" stroke-width="1" stroke-linejoin="round"/>
<polygon points="697.30,317.30 634.36,409.34 645.27,415.91" fill="#008800" stroke="#006400" stroke-width="1" stroke-linejoin="round"/>
<polygon points="697.30,317.30 658.10,391.59 666.82,395.58" fill="#008800" stroke="#006400" stroke-width="1" stroke-linejoin="round"/>
<polygon points="697.30,317.30 665.01,400.24 674.67,403.38" fill="#008800" stroke="#006400" stroke-width="1" stroke-linejoin="round"/>
<polygon points="697.30,317.30 674.34,404.63 684.45,406.68" fill="#008800" stroke="#006400" stroke-width="1" stroke-linejoin="round"/>
<polygon points="697.30,317.30 685.09,402.23 694.85,403.07" fill="#008800" stroke="#006400" stroke-width="1" stroke-linejoin="round"/>
<polygon points="697.30,317.30 694.69,408.56 705.11,408.27" fill="#008800" stroke="#006400" stroke-width="1" stroke-linejoin="round"/>
<polygon points="697.30,317.30 705.56,413.45 716.46,411.88" fill="#008800" stroke="#006400" stroke-width="1" stroke-linejoin="round"/>
<polygon points="697.30,317.30 715.57,407.47 725.73,404.80" fill="#008800" stroke="#006400" stroke-width="1" stroke-linejoin="round"/>
<polygon points="697.30,317.30 727.27,409.55 737.60,405.53" fill="#008800" stroke="#006400" stroke-width="1" stroke-linejoin="round"/>
<polygon points="697.30,317.30 736.76,403.72 746.36,398.65" fill="#008800" stroke="#006400" stroke-width="1" stroke-linejoin="round"/>
<polygon points="697.30,317.30 747.91,401.22 757.14,394.91" fill="#008800" stroke="#006400" stroke-width="1" stroke-linejoin="round"/>
<polygon points="697.30,317.30 759.59,398.07 768.39,390.45" fill="#008800" stroke="#006400" stroke-width="1" stroke-linejoin="round"/>
<polygon points="697.30,317.30 770.27,392.38 778.35,383.58" fill="#008800" stroke="#006400" stroke-width="1" stroke-linejoin="round"/>
<circle cx="697.3" cy="317.3" r="35.6" fill="none" stroke="#dcdcdc" stroke-width="2"/>
<circle cx="697.3" cy="317.3" r="71.2" fill="none" stroke="#00fa00" stroke-width="2"/>
<circle cx="697.3" cy="317.3" r="142.4" fill="none" stroke="#00a600" stroke-width="2"/>
<circle cx="697.3" cy="317.3" r="178.0" fill="none" stroke="#d2d2d2" stroke-width="2"/>
<text x="884.8" y="310.8" fill="#128a12" text-anchor="middle" textLength="6.0" lengthAdjust="spacingAndGlyphs">3</text>
<text x="882.3" y="289.5" fill="#128a12" text-anchor="middle" textLength="6.0" lengthAdjust="spacingAndGlyphs">4</text>
<text x="877.5" y="268.5" fill="#128a12" text-anchor="middle" textLength="6.0" lengthAdjust="spacingAndGlyphs">2</text>
<text x="870.2" y="248.2" fill="#128a12" text-anchor="middle" textLength="6.0" lengthAdjust="spacingAndGlyphs">6</text>
<text x="860.7" y="228.9" fill="#e8141c" text-anchor="middle" textLength="6.0" lengthAdjust="spacingAndGlyphs">1</text>
<text x="849.1" y="210.8" fill="#128a12" text-anchor="middle" textLength="12.0" lengthAdjust="spacingAndGlyphs">31</text>
<text x="835.5" y="194.1" fill="#128a12" text-anchor="middle" textLength="12.0" lengthAdjust="spacingAndGlyphs">33</text>
<text x="820.0" y="179.1" fill="#128a12" text-anchor="middle" textLength="12.0" lengthAdjust="spacingAndGlyphs">12</text>
<text x="803.0" y="166.0" fill="#128a12" text-anchor="middle" textLength="12.0" lengthAdjust="spacingAndGlyphs">13</text>
<text x="784.6" y="154.9" fill="#128a12" text-anchor="middle" textLength="6.0" lengthAdjust="spacingAndGlyphs">8</text>
<text x="765.0" y="145.9" fill="#128a12" text-anchor="middle" textLength="12.0" lengthAdjust="spacingAndGlyphs">10</text>
<text x="744.5" y="139.3" fill="#128a12" text-anchor="middle" textLength="12.0" lengthAdjust="spacingAndGlyphs">29</text>
<text x="723.4" y="135.0" fill="#128a12" text-anchor="middle" textLength="12.0" lengthAdjust="spacingAndGlyphs">30</text>
<text x="702.0" y="133.2" fill="#128a12" text-anchor="middle" textLength="11.2" lengthAdjust="spacingAndGlyphs">11</text>
<text x="680.5" y="133.8" fill="#128a12" text-anchor="middle" textLength="12.0" lengthAdjust="spacingAndGlyphs">15</text>
<text x="659.2" y="136.9" fill="#128a12" text-anchor="middle" textLength="12.0" lengthAdjust="spacingAndGlyphs">21</text>
<text x="638.4" y="142.3" fill="#128a12" text-anchor="middle" textLength="12.0" lengthAdjust="spacingAndGlyphs">23</text>
<text x="618.3" y="150.1" fill="#128a12" text-anchor="middle" textLength="12.0" lengthAdjust="spacingAndGlyphs">39</text>
<text x="599.3" y="160.2" fill="#128a12" text-anchor="middle" textLength="12.0" lengthAdjust="spacingAndGlyphs">41</text>
<text x="581.5" y="172.3" fill="#128a12" text-anchor="middle" textLength="12.0" lengthAdjust="spacingAndGlyphs">35</text>
<text x="565.2" y="186.4" fill="#128a12" text-anchor="middle" textLength="12.0" lengthAdjust="spacingAndGlyphs">37</text>
<text x="550.7" y="202.3" fill="#128a12" text-anchor="middle" textLength="12.0" lengthAdjust="spacingAndGlyphs">17</text>
<text x="538.0" y="219.7" fill="#128a12" text-anchor="middle" textLength="12.0" lengthAdjust="spacingAndGlyphs">18</text>
<text x="527.4" y="238.4" fill="#128a12" text-anchor="middle" textLength="12.0" lengthAdjust="spacingAndGlyphs">20</text>
<text x="519.1" y="258.3" fill="#128a12" text-anchor="middle" textLength="12.0" lengthAdjust="spacingAndGlyphs">24</text>
<text x="513.0" y="278.9" fill="#128a12" text-anchor="middle" textLength="12.0" lengthAdjust="spacingAndGlyphs">38</text>
<text x="509.3" y="300.1" fill="#128a12" text-anchor="middle" textLength="12.0" lengthAdjust="spacingAndGlyphs">42</text>
<text x="508.1" y="321.6" fill="#128a12" text-anchor="middle" textLength="12.0" lengthAdjust="spacingAndGlyphs">47</text>
<text x="509.3" y="343.1" fill="#128a12" text-anchor="middle" textLength="12.0" lengthAdjust="spacingAndGlyphs">48</text>
<text x="513.0" y="364.3" fill="#128a12" text-anchor="middle" textLength="12.0" lengthAdjust="spacingAndGlyphs">26</text>
<text x="519.1" y="384.9" fill="#128a12" text-anchor="middle" textLength="12.0" lengthAdjust="spacingAndGlyphs">27</text>
<text x="527.4" y="404.8" fill="#128a12" text-anchor="middle" textLength="12.0" lengthAdjust="spacingAndGlyphs">44</text>
<text x="538.0" y="423.5" fill="#128a12" text-anchor="middle" textLength="12.0" lengthAdjust="spacingAndGlyphs">45</text>
<text x="550.7" y="440.9" fill="#128a12" text-anchor="middle" textLength="12.0" lengthAdjust="spacingAndGlyphs">54</text>
<text x="565.2" y="456.8" fill="#128a12" text-anchor="middle" textLength="12.0" lengthAdjust="spacingAndGlyphs">55</text>
<text x="581.5" y="470.9" fill="#128a12" text-anchor="middle" textLength="12.0" lengthAdjust="spacingAndGlyphs">51</text>
<text x="599.3" y="483.0" fill="#128a12" text-anchor="middle" textLength="12.0" lengthAdjust="spacingAndGlyphs">53</text>
<text x="618.3" y="493.1" fill="#128a12" text-anchor="middle" textLength="6.0" lengthAdjust="spacingAndGlyphs">5</text>
<text x="638.4" y="500.9" fill="#128a12" text-anchor="middle" textLength="6.0" lengthAdjust="spacingAndGlyphs">7</text>
<text x="659.2" y="506.3" fill="#128a12" text-anchor="middle" textLength="12.0" lengthAdjust="spacingAndGlyphs">14</text>
<text x="680.5" y="509.4" fill="#128a12" text-anchor="middle" textLength="12.0" lengthAdjust="spacingAndGlyphs">32</text>
<text x="702.0" y="510.0" fill="#128a12" text-anchor="middle" textLength="6.0" lengthAdjust="spacingAndGlyphs">9</text>
<text x="723.4" y="508.2" fill="#128a12" text-anchor="middle" textLength="12.0" lengthAdjust="spacingAndGlyphs">16</text>
<text x="744.5" y="503.9" fill="#128a12" text-anchor="middle" textLength="12.0" lengthAdjust="spacingAndGlyphs">34</text>
<text x="765.0" y="497.3" fill="#128a12" text-anchor="middle" textLength="12.0" lengthAdjust="spacingAndGlyphs">22</text>
<text x="784.6" y="488.3" fill="#128a12" text-anchor="middle" textLength="12.0" lengthAdjust="spacingAndGlyphs">40</text>
<text x="803.0" y="477.2" fill="#128a12" text-anchor="middle" textLength="12.0" lengthAdjust="spacingAndGlyphs">36</text>
<text x="820.0" y="464.1" fill="#128a12" text-anchor="middle" textLength="12.0" lengthAdjust="spacingAndGlyphs">19</text>
<text x="835.5" y="449.1" fill="#128a12" text-anchor="middle" textLength="12.0" lengthAdjust="spacingAndGlyphs">25</text>
<text x="849.1" y="432.4" fill="#128a12" text-anchor="middle" textLength="12.0" lengthAdjust="spacingAndGlyphs">43</text>
<text x="860.7" y="414.3" fill="#128a12" text-anchor="middle" textLength="12.0" lengthAdjust="spacingAndGlyphs">49</text>
<text x="870.2" y="395.0" fill="#128a12" text-anchor="middle" textLength="12.0" lengthAdjust="spacingAndGlyphs">28</text>
<text x="877.5" y="374.7" fill="#128a12" text-anchor="middle" textLength="12.0" lengthAdjust="spacingAndGlyphs">46</text>
<text x="882.3" y="353.7" fill="#128a12" text-anchor="middle" textLength="12.0" lengthAdjust="spacingAndGlyphs">50</text>
<text x="884.8" y="332.4" fill="#128a12" text-anchor="middle" textLength="12.0" lengthAdjust="spacingAndGlyphs">52</text>
<text x="697.3" y="112.6" fill="#000" text-anchor="middle" style="font-size:13px" textLength="235.7" lengthAdjust="spacingAndGlyphs">Variaz. Resistenza (limiti rif.: 0% / +150%)</text>
</svg>
</body></html>
